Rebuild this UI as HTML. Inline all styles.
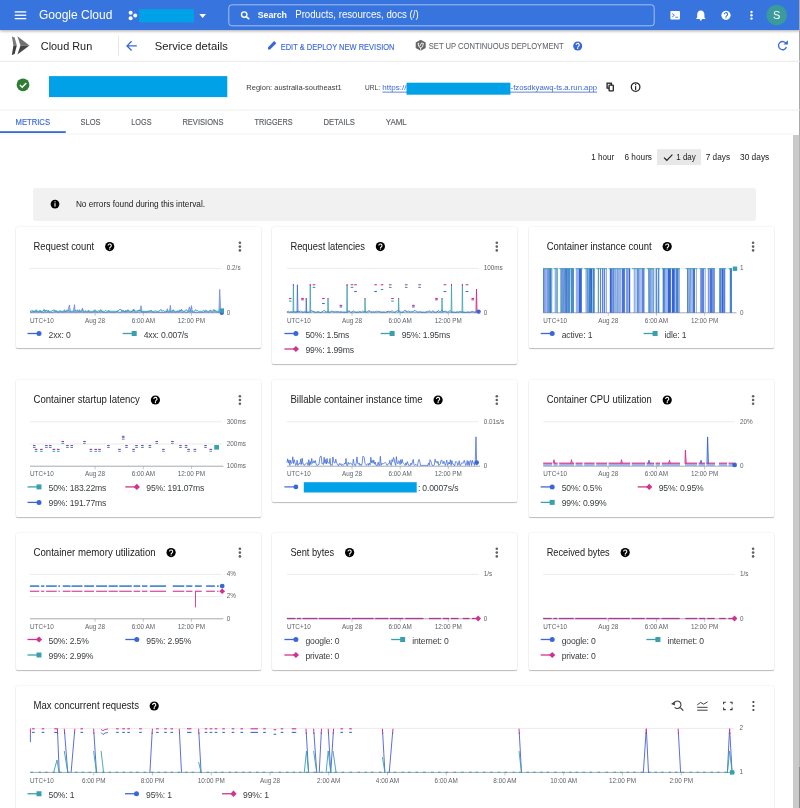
<!DOCTYPE html>
<html><head><meta charset="utf-8"><style>
html,body{margin:0;padding:0;width:800px;height:808px;overflow:hidden;background:#fff;position:relative}
svg{position:absolute;left:0;top:0;z-index:5;will-change:transform}
text{font-family:"Liberation Sans",sans-serif}
</style></head><body>
<div style="position:absolute;left:0px;top:0px;width:800px;height:30px;background:#3874de;box-shadow:0 1px 3px rgba(0,0,0,.35);z-index:2"></div><div style="position:absolute;left:0px;top:30px;width:800px;height:31px;background:#fff"></div><div style="position:absolute;left:33.25px;top:187.75px;width:722.75px;height:32.75px;background:#f1f1f1;border-radius:3px"></div><div style="position:absolute;left:15.5px;top:226.8px;width:245.0px;height:121.5px;background:#fff;border-radius:1.5px;box-shadow:0 1px 1px rgba(0,0,0,.24),0 0 1.5px rgba(0,0,0,.16)"></div><div style="position:absolute;left:272.4px;top:226.8px;width:245.0px;height:136.89999999999998px;background:#fff;border-radius:1.5px;box-shadow:0 1px 1px rgba(0,0,0,.24),0 0 1.5px rgba(0,0,0,.16)"></div><div style="position:absolute;left:528.7px;top:226.8px;width:245.0px;height:121.5px;background:#fff;border-radius:1.5px;box-shadow:0 1px 1px rgba(0,0,0,.24),0 0 1.5px rgba(0,0,0,.16)"></div><div style="position:absolute;left:15.5px;top:380.2px;width:245.0px;height:137.09999999999997px;background:#fff;border-radius:1.5px;box-shadow:0 1px 1px rgba(0,0,0,.24),0 0 1.5px rgba(0,0,0,.16)"></div><div style="position:absolute;left:272.4px;top:380.2px;width:245.0px;height:121.80000000000001px;background:#fff;border-radius:1.5px;box-shadow:0 1px 1px rgba(0,0,0,.24),0 0 1.5px rgba(0,0,0,.16)"></div><div style="position:absolute;left:528.7px;top:380.2px;width:245.0px;height:137.09999999999997px;background:#fff;border-radius:1.5px;box-shadow:0 1px 1px rgba(0,0,0,.24),0 0 1.5px rgba(0,0,0,.16)"></div><div style="position:absolute;left:15.5px;top:532.8px;width:245.0px;height:137.5px;background:#fff;border-radius:1.5px;box-shadow:0 1px 1px rgba(0,0,0,.24),0 0 1.5px rgba(0,0,0,.16)"></div><div style="position:absolute;left:272.4px;top:532.8px;width:245.0px;height:137.5px;background:#fff;border-radius:1.5px;box-shadow:0 1px 1px rgba(0,0,0,.24),0 0 1.5px rgba(0,0,0,.16)"></div><div style="position:absolute;left:528.7px;top:532.8px;width:245.0px;height:137.5px;background:#fff;border-radius:1.5px;box-shadow:0 1px 1px rgba(0,0,0,.24),0 0 1.5px rgba(0,0,0,.16)"></div><div style="position:absolute;left:15.5px;top:685.8px;width:758.1px;height:144.20000000000005px;background:#fff;border-radius:1.5px;box-shadow:0 1px 1px rgba(0,0,0,.24),0 0 1.5px rgba(0,0,0,.16)"></div><div style="position:absolute;left:793px;top:134.5px;width:7px;height:673.5px;background:#cacaca;z-index:3"></div><div style="position:absolute;left:798.6px;top:0px;width:1.3999999999999773px;height:134.5px;background:#a9a9a9;z-index:3"></div><div style="position:absolute;left:798.6px;top:134.5px;width:1.3999999999999773px;height:632.5px;background:#b3b3b3;z-index:3"></div><div style="position:absolute;left:798.6px;top:767px;width:1.3999999999999773px;height:41px;background:#8a8a8a;z-index:3"></div>
<svg width="800" height="808" viewBox="0 0 800 808">
<rect x="14.75" y="11.25" width="11.50" height="1.30" fill="#fff"/>
<rect x="14.75" y="14.60" width="11.50" height="1.30" fill="#fff"/>
<rect x="14.75" y="17.95" width="11.50" height="1.30" fill="#fff"/>
<text x="39.00" y="19.20" font-size="12.0" fill="#fff">Google Cloud</text>
<circle cx="130.6" cy="12.8" r="2.0" fill="#fff"/>
<circle cx="130.6" cy="18.2" r="2.0" fill="#fff"/>
<circle cx="135.2" cy="15.5" r="2.0" fill="#fff"/>
<rect x="139.00" y="9.10" width="55.00" height="13.30" fill="#00a1e6"/>
<path d="M199.3,14 L206,14 L202.65,17.9 Z" fill="#fff"/>
<rect x="228.8" y="4.8" width="425.4" height="21" rx="3" fill="none" stroke="rgba(255,255,255,0.55)" stroke-width="1"/>
<circle cx="244.2" cy="14.6" r="2.7" fill="none" stroke="#fff" stroke-width="1.4"/>
<line x1="246.20" y1="16.60" x2="249.20" y2="19.20" stroke="#fff" stroke-width="1.6"/>
<text x="257.70" y="18.40" font-size="9.6" fill="#fff" font-weight="700" textLength="29.3" lengthAdjust="spacingAndGlyphs">Search</text>
<text x="295.20" y="18.40" font-size="10.1" fill="#fff" textLength="123.5" lengthAdjust="spacingAndGlyphs">Products, resources, docs (/)</text>
<rect x="670.40" y="11.00" width="9.60" height="8.60" fill="#fff" rx="1"/>
<path d="M672.2,13.6 L674.4,15.3 L672.2,17" fill="none" stroke="#3874de" stroke-width="0.9"/>
<rect x="675.20" y="16.80" width="2.80" height="0.80" fill="#3874de"/>
<path d="M700.8,10.6 c-2.4,0 -3.6,1.9 -3.6,4 v2.8 l-1,1.1 v0.5 h9.2 v-0.5 l-1,-1.1 v-2.8 c0,-2.1 -1.2,-4 -3.6,-4z" fill="#fff"/>
<circle cx="700.8" cy="19.6" r="1.1" fill="#fff"/>
<circle cx="726.0" cy="15.3" r="4.6" fill="#fff"/>
<path d="M724.40,14.30 a1.60,1.60 0 1 1 2.40,1.35 c-0.6,0.4 -0.8,0.6 -0.8,1.3" fill="none" stroke="#3874de" stroke-width="1.10"/>
<circle cx="726.00" cy="17.80" r="0.65" fill="#3874de"/>
<circle cx="751.5" cy="12.00" r="1.2" fill="#fff"/>
<circle cx="751.5" cy="15.30" r="1.2" fill="#fff"/>
<circle cx="751.5" cy="18.60" r="1.2" fill="#fff"/>
<circle cx="776.7" cy="15" r="10.3" fill="#3b9a9c"/>
<text x="776.70" y="19.00" font-size="11" fill="#fff" text-anchor="middle">S</text>
<rect x="0.00" y="60.80" width="800.00" height="0.90" fill="#e6e6e6"/>
<path d="M11.9,36.6 L14.6,37.5 L16.8,45.4 L13.4,45.4 Z" fill="#7a7a7a"/>
<path d="M13.4,45.4 L16.8,45.4 L14.6,54 L11.9,55 Z" fill="#3e3e3e"/>
<path d="M17.4,36.3 L29.5,45.4 L20.5,45.4 Z" fill="#707070"/>
<path d="M20.5,45.4 L29.5,45.4 L17.4,54.6 Z" fill="#454545"/>
<text x="40.80" y="49.50" font-size="11.5" fill="#202124" textLength="51.4" lengthAdjust="spacingAndGlyphs">Cloud Run</text>
<rect x="118.20" y="35.70" width="0.80" height="20.00" fill="#e0e0e0"/>
<path d="M136.8,45.9 H127.6 M131.6,41.3 L127,45.9 L131.6,50.5" fill="none" stroke="#3a67d8" stroke-width="1.3"/>
<text x="154.70" y="49.60" font-size="11.8" fill="#202124" textLength="73.2" lengthAdjust="spacingAndGlyphs">Service details</text>
<path d="M268,47.3 L274.2,41.1 L276.3,43.2 L270.1,49.4 L268,49.4 Z" fill="#3a67d8"/>
<text x="280.70" y="49.60" font-size="8.3" fill="#3a67d8" stroke="#3a67d8" stroke-width="0.12" textLength="113.8" lengthAdjust="spacingAndGlyphs">EDIT &amp; DEPLOY NEW REVISION</text>
<path d="M420.7,39.7 L425.7,42.5 L425.7,48.0 L420.7,50.7 L415.7,48.0 L415.7,42.5 Z" fill="#666"/>
<path d="M418.0,43.4 Q418.3,47.6 420.7,47.9 Q423.1,47.6 423.4,43.4 M420.7,47.9 V50.6 M419.6,46.4 L421.9,42.6 M418.0,43.4 H419.2 M422.2,43.4 H423.4" fill="none" stroke="#fff" stroke-width="0.9"/>
<text x="428.80" y="48.90" font-size="8.5" fill="#5f6368" stroke="#5f6368" stroke-width="0.05" textLength="134.9" lengthAdjust="spacingAndGlyphs">SET UP CONTINUOUS DEPLOYMENT</text>
<circle cx="577.7" cy="46.0" r="4.5" fill="#3a67d8"/>
<path d="M576.13,45.02 a1.57,1.57 0 1 1 2.35,1.32 c-0.6,0.4 -0.8,0.6 -0.8,1.3" fill="none" stroke="#fff" stroke-width="1.08"/>
<circle cx="577.70" cy="48.45" r="0.64" fill="#fff"/>
<path d="M786.2,43.6 A4.1,4.1 0 1 0 786.5,47" fill="none" stroke="#3a67d8" stroke-width="1.3"/>
<path d="M783.5,44.6 L787.9,44.6 L787.9,40.2 Z" fill="#3a67d8"/>
<circle cx="23" cy="84.8" r="6.4" fill="#2e7d32"/>
<path d="M19.9,85 L22.2,87.2 L26.3,82.9" fill="none" stroke="#fff" stroke-width="1.4"/>
<rect x="49.00" y="76.10" width="178.30" height="21.00" fill="#00a1e6"/>
<text x="246.30" y="90.40" font-size="8.1" fill="#3c4043" textLength="95.5" lengthAdjust="spacingAndGlyphs">Region: australia-southeast1</text>
<text x="365.00" y="90.40" font-size="8.1" fill="#3c4043" textLength="15" lengthAdjust="spacingAndGlyphs">URL:</text>
<text x="382.30" y="90.40" font-size="8.1" fill="#3a67d8" textLength="24.2" lengthAdjust="spacingAndGlyphs">https://</text>
<text x="510.60" y="90.40" font-size="8.1" fill="#3a67d8" textLength="86.4" lengthAdjust="spacingAndGlyphs">-fzosdkyawq-ts.a.run.app</text>
<rect x="382.30" y="91.70" width="214.70" height="0.80" fill="#3a67d8"/>
<rect x="406.50" y="82.70" width="103.90" height="12.00" fill="#00a1e6"/>
<rect x="607.1" y="83.2" width="4.3" height="4.9" fill="none" stroke="#202124" stroke-width="1.3"/>
<rect x="609.1" y="85.2" width="4.2" height="5.7" rx="0.5" fill="#fff" stroke="#202124" stroke-width="1.3"/>
<circle cx="635.6" cy="87.1" r="4.3" fill="none" stroke="#202124" stroke-width="1.25"/>
<rect x="635.00" y="86.20" width="1.20" height="3.70" fill="#202124"/>
<rect x="635.00" y="84.10" width="1.20" height="1.20" fill="#202124"/>
<rect x="0.00" y="109.60" width="800.00" height="0.80" fill="#ececec"/>
<text x="15.50" y="125.40" font-size="8.6" fill="#3a67d8" stroke="#3a67d8" stroke-width="0.15" textLength="34.5" lengthAdjust="spacingAndGlyphs">METRICS</text>
<rect x="0.00" y="131.20" width="65.75" height="1.80" fill="#3a67d8"/>
<text x="80.50" y="125.40" font-size="8.6" fill="#5a5e63" stroke="#5a5e63" stroke-width="0.15" textLength="20" lengthAdjust="spacingAndGlyphs">SLOS</text>
<text x="131.25" y="125.40" font-size="8.6" fill="#5a5e63" stroke="#5a5e63" stroke-width="0.15" textLength="20.25" lengthAdjust="spacingAndGlyphs">LOGS</text>
<text x="182.40" y="125.40" font-size="8.6" fill="#5a5e63" stroke="#5a5e63" stroke-width="0.15" textLength="41.1" lengthAdjust="spacingAndGlyphs">REVISIONS</text>
<text x="254.50" y="125.40" font-size="8.6" fill="#5a5e63" stroke="#5a5e63" stroke-width="0.15" textLength="38.1" lengthAdjust="spacingAndGlyphs">TRIGGERS</text>
<text x="323.50" y="125.40" font-size="8.6" fill="#5a5e63" stroke="#5a5e63" stroke-width="0.15" textLength="31.5" lengthAdjust="spacingAndGlyphs">DETAILS</text>
<text x="385.70" y="125.40" font-size="8.6" fill="#5a5e63" stroke="#5a5e63" stroke-width="0.15" textLength="21" lengthAdjust="spacingAndGlyphs">YAML</text>
<rect x="0.00" y="133.60" width="793.00" height="0.80" fill="#ededed"/>
<rect x="657.00" y="149.25" width="44.00" height="15.75" fill="#e8e8e8"/>
<path d="M664,157.6 L666.8,160.3 L672.4,154.6" fill="none" stroke="#202124" stroke-width="1.2"/>
<text x="591.25" y="160.10" font-size="8.5" fill="#202124" textLength="23" lengthAdjust="spacingAndGlyphs">1 hour</text>
<text x="624.50" y="160.10" font-size="8.5" fill="#202124" textLength="27.5" lengthAdjust="spacingAndGlyphs">6 hours</text>
<text x="676.25" y="160.10" font-size="8.5" fill="#202124" textLength="19.5" lengthAdjust="spacingAndGlyphs">1 day</text>
<text x="705.75" y="160.10" font-size="8.5" fill="#202124" textLength="24.25" lengthAdjust="spacingAndGlyphs">7 days</text>
<text x="740.00" y="160.10" font-size="8.5" fill="#202124" textLength="29.25" lengthAdjust="spacingAndGlyphs">30 days</text>
<circle cx="55" cy="204.1" r="4.4" fill="#000"/>
<rect x="54.45" y="203.20" width="1.10" height="3.40" fill="#fff"/>
<rect x="54.45" y="201.30" width="1.10" height="1.10" fill="#fff"/>
<text x="75.90" y="207.00" font-size="8.8" fill="#202124" textLength="129.2" lengthAdjust="spacingAndGlyphs">No errors found during this interval.</text>
<text x="33.50" y="249.70" font-size="10.4" fill="#202124" textLength="60.7" lengthAdjust="spacingAndGlyphs">Request count</text>
<circle cx="109.7" cy="246.60000000000002" r="4.6" fill="#000"/>
<path d="M108.10,245.60 a1.60,1.60 0 1 1 2.40,1.35 c-0.6,0.4 -0.8,0.6 -0.8,1.3" fill="none" stroke="#fff" stroke-width="1.10"/>
<circle cx="109.70" cy="249.10" r="0.65" fill="#fff"/>
<circle cx="239.9" cy="242.80" r="1.3" fill="#5f6368"/>
<circle cx="239.9" cy="246.60" r="1.3" fill="#5f6368"/>
<circle cx="239.9" cy="250.40" r="1.3" fill="#5f6368"/>
<line x1="30.00" y1="268.40" x2="221.80" y2="268.40" stroke="#e6e6e6" stroke-width="0.8"/>
<line x1="30.00" y1="312.80" x2="223.30" y2="312.80" stroke="#9aa0a6" stroke-width="0.9"/>
<text x="226.80" y="270.10" font-size="6.35" fill="#5f6368">0.2/s</text>
<text x="226.80" y="314.50" font-size="6.35" fill="#5f6368">0</text>
<line x1="95.10" y1="312.80" x2="95.10" y2="315.80" stroke="#9aa0a6" stroke-width="0.6"/>
<text x="95.10" y="322.90" font-size="6.35" fill="#5f6368" text-anchor="middle">Aug 28</text>
<line x1="143.30" y1="312.80" x2="143.30" y2="315.80" stroke="#9aa0a6" stroke-width="0.6"/>
<text x="143.30" y="322.90" font-size="6.35" fill="#5f6368" text-anchor="middle">6:00 AM</text>
<line x1="191.40" y1="312.80" x2="191.40" y2="315.80" stroke="#9aa0a6" stroke-width="0.6"/>
<text x="191.40" y="322.90" font-size="6.35" fill="#5f6368" text-anchor="middle">12:00 PM</text>
<text x="30.00" y="322.90" font-size="6.35" fill="#5f6368">UTC+10</text>
<polygon points="30.00,312.80 30.00,311.00 31.01,312.10 32.02,312.10 33.03,311.12 34.04,310.85 35.05,312.10 36.06,309.58 37.07,310.68 38.08,312.10 39.09,312.10 40.09,309.94 41.10,312.10 42.11,312.10 43.12,312.10 44.13,312.10 45.14,310.46 46.15,312.10 47.16,312.10 48.17,309.91 49.18,312.10 50.19,312.10 51.20,312.10 52.21,312.10 53.22,312.10 54.23,311.07 55.24,310.80 56.25,310.40 57.26,312.10 58.27,312.10 59.27,312.10 60.28,310.83 61.29,311.29 62.30,312.10 63.31,312.10 64.32,309.50 65.33,312.10 66.34,310.03 67.35,310.98 68.36,308.54 69.37,304.93 70.38,310.61 71.39,312.10 72.40,312.10 73.41,310.77 74.42,304.55 75.43,312.10 76.44,312.10 77.45,310.57 78.45,312.10 79.46,309.68 80.47,312.10 81.48,310.26 82.49,307.90 83.50,312.10 84.51,312.10 85.52,310.85 86.53,312.10 87.54,312.10 88.55,309.98 89.56,312.10 90.57,312.10 91.58,312.10 92.59,312.10 93.60,311.00 94.61,309.65 95.62,310.20 96.63,312.10 97.63,312.10 98.64,312.10 99.65,310.82 100.66,312.10 101.67,310.38 102.68,312.10 103.69,312.10 104.70,312.10 105.71,312.10 106.72,312.10 107.73,312.10 108.74,310.18 109.75,312.10 110.76,312.10 111.77,312.10 112.78,312.10 113.79,312.10 114.80,312.10 115.81,312.10 116.81,311.06 117.82,311.15 118.83,312.10 119.84,312.10 120.85,312.10 121.86,310.33 122.87,310.44 123.88,310.66 124.89,312.10 125.90,310.05 126.91,312.10 127.92,310.77 128.93,311.04 129.94,312.10 130.95,312.10 131.96,311.18 132.97,309.42 133.98,309.59 134.99,312.10 135.99,312.10 137.00,312.10 138.01,311.20 139.02,309.78 140.03,310.61 141.04,305.63 142.05,312.10 143.06,312.10 144.07,312.10 145.08,312.10 146.09,312.10 147.10,312.10 148.11,311.16 149.12,311.13 150.13,312.10 151.14,310.38 152.15,312.10 153.16,312.10 154.17,312.10 155.17,312.10 156.18,312.10 157.19,312.10 158.20,312.10 159.21,312.10 160.22,312.10 161.23,312.10 162.24,312.10 163.25,312.10 164.26,312.10 165.27,312.10 166.28,312.10 167.29,308.63 168.30,312.10 169.31,312.10 170.32,305.31 171.33,312.10 172.34,312.10 173.35,309.84 174.35,312.10 175.36,312.10 176.37,312.10 177.38,310.79 178.39,312.10 179.40,309.96 180.41,310.27 181.42,309.51 182.43,312.10 183.44,312.10 184.45,310.88 185.46,312.10 186.47,312.10 187.48,312.10 188.49,309.50 189.50,306.84 190.51,310.61 191.52,305.55 192.53,312.10 193.53,312.10 194.54,312.10 195.55,312.10 196.56,312.10 197.57,312.10 198.58,312.10 199.59,312.10 200.60,312.10 201.61,312.10 202.62,312.10 203.63,312.10 204.64,310.70 205.65,309.99 206.66,310.97 207.67,312.10 208.68,312.10 209.69,310.92 210.70,310.82 211.71,312.10 212.71,312.10 213.72,311.18 214.73,310.29 215.74,310.76 216.75,312.10 217.76,312.10 218.77,312.10 219.78,289.30 220.79,312.10 221.80,312.10 221.80,312.80" fill="#3a67d8" fill-opacity="0.45"/>
<polyline points="30.00,311.00 31.01,312.10 32.02,312.10 33.03,311.12 34.04,310.85 35.05,312.10 36.06,309.58 37.07,310.68 38.08,312.10 39.09,312.10 40.09,309.94 41.10,312.10 42.11,312.10 43.12,312.10 44.13,312.10 45.14,310.46 46.15,312.10 47.16,312.10 48.17,309.91 49.18,312.10 50.19,312.10 51.20,312.10 52.21,312.10 53.22,312.10 54.23,311.07 55.24,310.80 56.25,310.40 57.26,312.10 58.27,312.10 59.27,312.10 60.28,310.83 61.29,311.29 62.30,312.10 63.31,312.10 64.32,309.50 65.33,312.10 66.34,310.03 67.35,310.98 68.36,308.54 69.37,304.93 70.38,310.61 71.39,312.10 72.40,312.10 73.41,310.77 74.42,304.55 75.43,312.10 76.44,312.10 77.45,310.57 78.45,312.10 79.46,309.68 80.47,312.10 81.48,310.26 82.49,307.90 83.50,312.10 84.51,312.10 85.52,310.85 86.53,312.10 87.54,312.10 88.55,309.98 89.56,312.10 90.57,312.10 91.58,312.10 92.59,312.10 93.60,311.00 94.61,309.65 95.62,310.20 96.63,312.10 97.63,312.10 98.64,312.10 99.65,310.82 100.66,312.10 101.67,310.38 102.68,312.10 103.69,312.10 104.70,312.10 105.71,312.10 106.72,312.10 107.73,312.10 108.74,310.18 109.75,312.10 110.76,312.10 111.77,312.10 112.78,312.10 113.79,312.10 114.80,312.10 115.81,312.10 116.81,311.06 117.82,311.15 118.83,312.10 119.84,312.10 120.85,312.10 121.86,310.33 122.87,310.44 123.88,310.66 124.89,312.10 125.90,310.05 126.91,312.10 127.92,310.77 128.93,311.04 129.94,312.10 130.95,312.10 131.96,311.18 132.97,309.42 133.98,309.59 134.99,312.10 135.99,312.10 137.00,312.10 138.01,311.20 139.02,309.78 140.03,310.61 141.04,305.63 142.05,312.10 143.06,312.10 144.07,312.10 145.08,312.10 146.09,312.10 147.10,312.10 148.11,311.16 149.12,311.13 150.13,312.10 151.14,310.38 152.15,312.10 153.16,312.10 154.17,312.10 155.17,312.10 156.18,312.10 157.19,312.10 158.20,312.10 159.21,312.10 160.22,312.10 161.23,312.10 162.24,312.10 163.25,312.10 164.26,312.10 165.27,312.10 166.28,312.10 167.29,308.63 168.30,312.10 169.31,312.10 170.32,305.31 171.33,312.10 172.34,312.10 173.35,309.84 174.35,312.10 175.36,312.10 176.37,312.10 177.38,310.79 178.39,312.10 179.40,309.96 180.41,310.27 181.42,309.51 182.43,312.10 183.44,312.10 184.45,310.88 185.46,312.10 186.47,312.10 187.48,312.10 188.49,309.50 189.50,306.84 190.51,310.61 191.52,305.55 192.53,312.10 193.53,312.10 194.54,312.10 195.55,312.10 196.56,312.10 197.57,312.10 198.58,312.10 199.59,312.10 200.60,312.10 201.61,312.10 202.62,312.10 203.63,312.10 204.64,310.70 205.65,309.99 206.66,310.97 207.67,312.10 208.68,312.10 209.69,310.92 210.70,310.82 211.71,312.10 212.71,312.10 213.72,311.18 214.73,310.29 215.74,310.76 216.75,312.10 217.76,312.10 218.77,312.10 219.78,289.30 220.79,312.10 221.80,312.10" fill="none" stroke="#3a67d8" stroke-width="0.5" stroke-linejoin="round"/>
<polyline points="30.00,311.30 31.01,311.30 32.02,310.43 33.03,311.30 34.04,311.30 35.05,311.30 36.06,311.01 37.07,311.30 38.08,311.30 39.09,311.18 40.09,311.30 41.10,311.30 42.11,311.30 43.12,311.30 44.13,309.34 45.14,311.30 46.15,309.96 47.16,311.30 48.17,311.30 49.18,311.30 50.19,311.30 51.20,311.30 52.21,310.53 53.22,310.38 54.23,309.76 55.24,311.30 56.25,311.30 57.26,311.30 58.27,311.30 59.27,310.95 60.28,311.30 61.29,311.30 62.30,311.30 63.31,311.30 64.32,311.30 65.33,311.30 66.34,311.17 67.35,311.30 68.36,310.57 69.37,311.30 70.38,311.30 71.39,311.30 72.40,311.10 73.41,311.30 74.42,311.30 75.43,310.24 76.44,311.30 77.45,309.76 78.45,311.30 79.46,311.30 80.47,311.30 81.48,311.30 82.49,309.91 83.50,311.30 84.51,311.30 85.52,310.89 86.53,311.30 87.54,311.30 88.55,311.30 89.56,311.30 90.57,311.30 91.58,311.30 92.59,311.30 93.60,311.30 94.61,311.30 95.62,311.27 96.63,311.30 97.63,311.30 98.64,310.80 99.65,311.30 100.66,309.48 101.67,311.30 102.68,311.30 103.69,311.30 104.70,311.29 105.71,310.35 106.72,311.30 107.73,311.30 108.74,310.75 109.75,311.30 110.76,311.30 111.77,311.30 112.78,311.30 113.79,311.30 114.80,311.30 115.81,311.30 116.81,311.30 117.82,311.30 118.83,309.87 119.84,309.53 120.85,309.39 121.86,311.30 122.87,311.30 123.88,311.30 124.89,311.30 125.90,311.30 126.91,311.30 127.92,309.74 128.93,311.30 129.94,311.00 130.95,311.30 131.96,311.30 132.97,311.30 133.98,309.57 134.99,311.30 135.99,311.04 137.00,311.08 138.01,310.68 139.02,310.30 140.03,310.80 141.04,311.30 142.05,311.30 143.06,311.30 144.07,311.30 145.08,311.30 146.09,311.30 147.10,311.30 148.11,311.30 149.12,311.30 150.13,310.82 151.14,310.41 152.15,311.30 153.16,311.30 154.17,311.30 155.17,310.77 156.18,311.26 157.19,311.30 158.20,311.30 159.21,311.30 160.22,309.85 161.23,309.63 162.24,311.30 163.25,310.25 164.26,311.30 165.27,311.30 166.28,311.30 167.29,311.30 168.30,311.30 169.31,311.30 170.32,311.30 171.33,311.30 172.34,311.15 173.35,309.82 174.35,311.30 175.36,311.30 176.37,311.30 177.38,311.30 178.39,311.18 179.40,311.30 180.41,311.30 181.42,309.34 182.43,310.38 183.44,311.30 184.45,311.30 185.46,310.25 186.47,309.66 187.48,311.30 188.49,311.30 189.50,311.30 190.51,311.30 191.52,311.30 192.53,311.30 193.53,311.30 194.54,311.30 195.55,309.63 196.56,310.77 197.57,310.55 198.58,311.30 199.59,311.30 200.60,311.30 201.61,311.30 202.62,311.20 203.63,310.36 204.64,311.30 205.65,311.30 206.66,310.88 207.67,311.30 208.68,311.30 209.69,310.62 210.70,310.16 211.71,311.30 212.71,311.30 213.72,309.36 214.73,311.30 215.74,310.50 216.75,311.30 217.76,311.24 218.77,311.30 219.78,310.52 220.79,311.30 221.80,311.08" fill="none" stroke="#3aa0b0" stroke-width="1.0" stroke-linejoin="round"/>
<circle cx="221.80" cy="312.80" r="2.2" fill="#3a67d8"/>
<rect x="219.60" y="308.40" width="4.40" height="4.40" fill="#3aa0b0"/>
<line x1="27.50" y1="333.50" x2="38.50" y2="333.50" stroke="#3a67d8" stroke-width="1.3"/>
<circle cx="39.00" cy="333.50" r="2.5" fill="#3a67d8"/>
<text x="48.50" y="337.50" font-size="8.6" fill="#3c4043" letter-spacing="-0.15">2xx: 0</text>
<line x1="122.70" y1="333.50" x2="133.70" y2="333.50" stroke="#3aa0b0" stroke-width="1.3"/>
<rect x="131.70" y="331.00" width="5.00" height="5.00" fill="#3aa0b0"/>
<text x="143.70" y="337.50" font-size="8.6" fill="#3c4043" letter-spacing="-0.15">4xx: 0.007/s</text>
<text x="290.40" y="249.70" font-size="10.4" fill="#202124" textLength="74.5" lengthAdjust="spacingAndGlyphs">Request latencies</text>
<circle cx="380.4" cy="246.60000000000002" r="4.6" fill="#000"/>
<path d="M378.80,245.60 a1.60,1.60 0 1 1 2.40,1.35 c-0.6,0.4 -0.8,0.6 -0.8,1.3" fill="none" stroke="#fff" stroke-width="1.10"/>
<circle cx="380.40" cy="249.10" r="0.65" fill="#fff"/>
<circle cx="496.79999999999995" cy="242.80" r="1.3" fill="#5f6368"/>
<circle cx="496.79999999999995" cy="246.60" r="1.3" fill="#5f6368"/>
<circle cx="496.79999999999995" cy="250.40" r="1.3" fill="#5f6368"/>
<line x1="286.90" y1="268.40" x2="478.70" y2="268.40" stroke="#e6e6e6" stroke-width="0.8"/>
<line x1="286.90" y1="312.80" x2="480.20" y2="312.80" stroke="#9aa0a6" stroke-width="0.9"/>
<text x="483.70" y="270.10" font-size="6.35" fill="#5f6368">100ms</text>
<text x="483.70" y="314.50" font-size="6.35" fill="#5f6368">0</text>
<line x1="352.00" y1="312.80" x2="352.00" y2="315.80" stroke="#9aa0a6" stroke-width="0.6"/>
<text x="352.00" y="322.90" font-size="6.35" fill="#5f6368" text-anchor="middle">Aug 28</text>
<line x1="400.20" y1="312.80" x2="400.20" y2="315.80" stroke="#9aa0a6" stroke-width="0.6"/>
<text x="400.20" y="322.90" font-size="6.35" fill="#5f6368" text-anchor="middle">6:00 AM</text>
<line x1="448.30" y1="312.80" x2="448.30" y2="315.80" stroke="#9aa0a6" stroke-width="0.6"/>
<text x="448.30" y="322.90" font-size="6.35" fill="#5f6368" text-anchor="middle">12:00 PM</text>
<text x="286.90" y="322.90" font-size="6.35" fill="#5f6368">UTC+10</text>
<polyline points="286.90,311.87 288.25,312.20 289.60,312.20 290.96,312.20 292.31,312.20 293.66,312.20 295.01,311.84 296.36,311.56 297.72,311.40 299.07,312.20 300.42,312.35 301.77,311.74 303.13,312.20 304.48,312.42 305.83,312.20 307.18,312.20 308.53,312.23 309.89,312.20 311.24,312.14 312.59,311.35 313.94,312.20 315.29,312.20 316.65,312.22 318.00,311.35 319.35,312.20 320.70,312.47 322.06,311.69 323.41,312.19 324.76,312.20 326.11,312.20 327.46,312.46 328.82,312.00 330.17,312.20 331.52,311.54 332.87,312.20 334.22,312.20 335.58,311.34 336.93,311.52 338.28,312.23 339.63,312.20 340.99,311.36 342.34,312.28 343.69,312.00 345.04,312.20 346.39,312.20 347.75,312.03 349.10,311.33 350.45,312.44 351.80,312.03 353.15,312.20 354.51,312.20 355.86,312.20 357.21,312.20 358.56,312.20 359.92,312.28 361.27,312.20 362.62,312.20 363.97,311.70 365.32,312.05 366.68,312.30 368.03,312.16 369.38,311.35 370.73,311.34 372.08,312.07 373.44,312.20 374.79,312.20 376.14,312.44 377.49,312.05 378.85,312.20 380.20,312.06 381.55,312.20 382.90,312.01 384.25,312.20 385.61,312.20 386.96,312.46 388.31,311.40 389.66,311.60 391.01,312.20 392.37,312.17 393.72,312.20 395.07,312.20 396.42,311.64 397.78,312.17 399.13,311.59 400.48,312.20 401.83,312.20 403.18,312.20 404.54,312.22 405.89,311.35 407.24,312.20 408.59,312.20 409.94,311.91 411.30,312.20 412.65,311.54 414.00,312.20 415.35,312.20 416.71,312.20 418.06,312.20 419.41,312.12 420.76,311.56 422.11,312.26 423.47,312.20 424.82,312.42 426.17,311.84 427.52,311.32 428.88,312.20 430.23,312.20 431.58,312.40 432.93,311.90 434.28,312.20 435.64,312.22 436.99,311.76 438.34,312.20 439.69,312.20 441.04,312.20 442.40,312.20 443.75,311.49 445.10,311.82 446.45,311.61 447.80,312.20 449.16,312.32 450.51,312.20 451.86,312.20 453.21,312.02 454.57,312.20 455.92,312.20 457.27,311.53 458.62,312.20 459.97,312.20 461.33,311.93 462.68,312.20 464.03,312.20 465.38,312.20 466.74,312.15 468.09,312.27 469.44,312.20 470.79,312.20 472.14,312.20 473.50,311.46 474.85,312.19 476.20,312.20" fill="none" stroke="#3aa0b0" stroke-width="0.7" stroke-linejoin="round"/>
<polyline points="286.90,312.20 288.25,311.19 289.60,312.20 290.96,311.69 292.31,312.05 293.66,311.18 295.01,312.20 296.36,312.47 297.72,311.01 299.07,311.81 300.42,310.75 301.77,312.20 303.13,312.28 304.48,311.29 305.83,312.20 307.18,312.14 308.53,312.20 309.89,311.88 311.24,310.40 312.59,311.25 313.94,311.58 315.29,312.20 316.65,312.20 318.00,312.07 319.35,312.20 320.70,312.49 322.06,312.20 323.41,310.70 324.76,310.56 326.11,312.14 327.46,311.29 328.82,312.20 330.17,312.20 331.52,311.13 332.87,311.39 334.22,311.88 335.58,312.20 336.93,312.20 338.28,311.42 339.63,312.20 340.99,312.20 342.34,312.22 343.69,312.20 345.04,312.20 346.39,312.38 347.75,312.20 349.10,310.51 350.45,312.20 351.80,312.20 353.15,310.77 354.51,311.61 355.86,312.20 357.21,312.20 358.56,312.02 359.92,311.36 361.27,312.23 362.62,310.91 363.97,312.20 365.32,311.26 366.68,312.20 368.03,310.66 369.38,311.18 370.73,312.20 372.08,312.20 373.44,311.58 374.79,312.20 376.14,311.05 377.49,311.54 378.85,311.14 380.20,311.98 381.55,312.20 382.90,312.20 384.25,312.10 385.61,312.26 386.96,311.55 388.31,311.53 389.66,312.20 391.01,311.10 392.37,310.89 393.72,312.20 395.07,312.20 396.42,311.39 397.78,310.41 399.13,310.61 400.48,312.20 401.83,312.20 403.18,312.20 404.54,310.34 405.89,310.40 407.24,312.20 408.59,310.77 409.94,312.20 411.30,311.73 412.65,312.20 414.00,310.53 415.35,310.71 416.71,311.40 418.06,312.20 419.41,311.92 420.76,312.20 422.11,312.42 423.47,312.15 424.82,312.20 426.17,312.20 427.52,312.20 428.88,310.77 430.23,311.33 431.58,312.20 432.93,310.58 434.28,312.20 435.64,312.20 436.99,312.20 438.34,310.32 439.69,312.20 441.04,310.75 442.40,310.32 443.75,312.20 445.10,310.82 446.45,312.11 447.80,312.20 449.16,310.70 450.51,311.09 451.86,312.20 453.21,312.20 454.57,312.20 455.92,312.50 457.27,312.17 458.62,312.20 459.97,311.37 461.33,312.20 462.68,312.00 464.03,312.20 465.38,312.49 466.74,312.27 468.09,312.01 469.44,312.20 470.79,312.20 472.14,311.13 473.50,312.20 474.85,312.20 476.20,312.17" fill="none" stroke="#3a67d8" stroke-width="0.7" stroke-linejoin="round"/>
<polyline points="293.00,312.50 293.40,284.75 293.80,312.50" fill="none" stroke="#3aa0b0" stroke-width="0.8" stroke-linejoin="round"/>
<line x1="293.40" y1="283.95" x2="293.40" y2="285.95" stroke="#d0338e" stroke-width="1.0"/>
<polyline points="309.85,312.50 310.25,284.75 310.65,312.50" fill="none" stroke="#3aa0b0" stroke-width="0.8" stroke-linejoin="round"/>
<line x1="310.25" y1="283.95" x2="310.25" y2="285.95" stroke="#d0338e" stroke-width="1.0"/>
<polyline points="346.70,312.50 347.10,284.75 347.50,312.50" fill="none" stroke="#3aa0b0" stroke-width="0.8" stroke-linejoin="round"/>
<line x1="347.10" y1="283.95" x2="347.10" y2="285.95" stroke="#d0338e" stroke-width="1.0"/>
<polyline points="451.10,312.50 451.50,284.75 451.90,312.50" fill="none" stroke="#3aa0b0" stroke-width="0.8" stroke-linejoin="round"/>
<line x1="451.50" y1="283.95" x2="451.50" y2="285.95" stroke="#d0338e" stroke-width="1.0"/>
<polyline points="462.00,312.50 462.40,284.75 462.80,312.50" fill="none" stroke="#3aa0b0" stroke-width="0.8" stroke-linejoin="round"/>
<line x1="462.40" y1="283.95" x2="462.40" y2="285.95" stroke="#d0338e" stroke-width="1.0"/>
<polyline points="297.00,312.50 297.40,284.75 298.00,312.50" fill="none" stroke="#3a67d8" stroke-width="0.8" stroke-linejoin="round"/>
<polyline points="305.95,312.50 306.25,298.50 306.75,312.50" fill="none" stroke="#3a67d8" stroke-width="0.8" stroke-linejoin="round"/>
<line x1="305.75" y1="298.50" x2="306.75" y2="298.50" stroke="#d0338e" stroke-width="1.0"/>
<polyline points="327.70,312.50 328.00,298.50 328.50,312.50" fill="none" stroke="#3aa0b0" stroke-width="0.8" stroke-linejoin="round"/>
<line x1="327.50" y1="298.50" x2="328.50" y2="298.50" stroke="#d0338e" stroke-width="1.0"/>
<polyline points="364.70,312.50 365.00,298.50 365.50,312.50" fill="none" stroke="#3aa0b0" stroke-width="0.8" stroke-linejoin="round"/>
<line x1="364.50" y1="298.50" x2="365.50" y2="298.50" stroke="#d0338e" stroke-width="1.0"/>
<polyline points="398.30,312.50 398.60,298.50 399.10,312.50" fill="none" stroke="#3aa0b0" stroke-width="0.8" stroke-linejoin="round"/>
<line x1="398.10" y1="298.50" x2="399.10" y2="298.50" stroke="#d0338e" stroke-width="1.0"/>
<polyline points="441.70,312.50 442.00,298.50 442.50,312.50" fill="none" stroke="#3aa0b0" stroke-width="0.8" stroke-linejoin="round"/>
<line x1="441.50" y1="298.50" x2="442.50" y2="298.50" stroke="#d0338e" stroke-width="1.0"/>
<line x1="312.70" y1="284.75" x2="315.30" y2="284.75" stroke="#d0338e" stroke-width="1.1"/>
<line x1="312.70" y1="287.40" x2="315.30" y2="287.40" stroke="#3aa0b0" stroke-width="1.1"/>
<line x1="350.70" y1="284.75" x2="353.30" y2="284.75" stroke="#d0338e" stroke-width="1.1"/>
<line x1="350.70" y1="287.40" x2="353.30" y2="287.40" stroke="#3aa0b0" stroke-width="1.1"/>
<line x1="354.20" y1="284.75" x2="356.80" y2="284.75" stroke="#d0338e" stroke-width="1.1"/>
<line x1="354.20" y1="291.50" x2="356.80" y2="291.50" stroke="#3a67d8" stroke-width="1.1"/>
<line x1="374.30" y1="284.75" x2="376.90" y2="284.75" stroke="#d0338e" stroke-width="1.1"/>
<line x1="374.30" y1="291.50" x2="376.90" y2="291.50" stroke="#3a67d8" stroke-width="1.1"/>
<line x1="380.70" y1="284.75" x2="383.30" y2="284.75" stroke="#d0338e" stroke-width="1.1"/>
<line x1="380.70" y1="289.50" x2="383.30" y2="289.50" stroke="#3aa0b0" stroke-width="1.1"/>
<line x1="388.95" y1="284.75" x2="391.55" y2="284.75" stroke="#d0338e" stroke-width="1.1"/>
<line x1="388.95" y1="287.40" x2="391.55" y2="287.40" stroke="#3aa0b0" stroke-width="1.1"/>
<line x1="404.95" y1="284.75" x2="407.55" y2="284.75" stroke="#d0338e" stroke-width="1.1"/>
<line x1="404.95" y1="287.40" x2="407.55" y2="287.40" stroke="#3aa0b0" stroke-width="1.1"/>
<line x1="418.30" y1="284.75" x2="420.90" y2="284.75" stroke="#d0338e" stroke-width="1.1"/>
<line x1="418.30" y1="287.40" x2="420.90" y2="287.40" stroke="#3aa0b0" stroke-width="1.1"/>
<line x1="443.60" y1="284.75" x2="446.20" y2="284.75" stroke="#d0338e" stroke-width="1.1"/>
<line x1="443.60" y1="291.50" x2="446.20" y2="291.50" stroke="#3a67d8" stroke-width="1.1"/>
<line x1="465.70" y1="284.75" x2="468.30" y2="284.75" stroke="#d0338e" stroke-width="1.1"/>
<line x1="465.70" y1="291.50" x2="468.30" y2="291.50" stroke="#3a67d8" stroke-width="1.1"/>
<line x1="288.95" y1="298.50" x2="291.55" y2="298.50" stroke="#d0338e" stroke-width="1.1"/>
<line x1="288.95" y1="301.10" x2="291.55" y2="301.10" stroke="#3aa0b0" stroke-width="1.1"/>
<line x1="301.20" y1="298.50" x2="303.80" y2="298.50" stroke="#d0338e" stroke-width="1.1"/>
<line x1="301.20" y1="299.80" x2="303.80" y2="299.80" stroke="#d0338e" stroke-width="1.1"/>
<line x1="322.10" y1="298.50" x2="324.70" y2="298.50" stroke="#d0338e" stroke-width="1.1"/>
<line x1="322.10" y1="303.50" x2="324.70" y2="303.50" stroke="#3a67d8" stroke-width="1.1"/>
<line x1="391.20" y1="298.50" x2="393.80" y2="298.50" stroke="#d0338e" stroke-width="1.1"/>
<line x1="391.20" y1="301.10" x2="393.80" y2="301.10" stroke="#3aa0b0" stroke-width="1.1"/>
<line x1="435.20" y1="298.50" x2="437.80" y2="298.50" stroke="#d0338e" stroke-width="1.1"/>
<line x1="435.20" y1="299.80" x2="437.80" y2="299.80" stroke="#d0338e" stroke-width="1.1"/>
<line x1="471.45" y1="298.50" x2="474.05" y2="298.50" stroke="#d0338e" stroke-width="1.1"/>
<line x1="471.45" y1="299.80" x2="474.05" y2="299.80" stroke="#d0338e" stroke-width="1.1"/>
<line x1="339.60" y1="305.40" x2="342.20" y2="305.40" stroke="#d0338e" stroke-width="1.1"/>
<line x1="339.60" y1="306.90" x2="342.20" y2="306.90" stroke="#3a67d8" stroke-width="1.1"/>
<line x1="412.10" y1="305.40" x2="414.70" y2="305.40" stroke="#d0338e" stroke-width="1.1"/>
<line x1="412.10" y1="306.90" x2="414.70" y2="306.90" stroke="#3a67d8" stroke-width="1.1"/>
<polyline points="476.00,312.50 476.50,289.00 477.00,312.50" fill="none" stroke="#d0338e" stroke-width="1.0" stroke-linejoin="round"/>
<circle cx="478.60" cy="311.60" r="2.2" fill="#3a67d8"/>
<line x1="284.40" y1="333.50" x2="295.40" y2="333.50" stroke="#3a67d8" stroke-width="1.3"/>
<circle cx="295.90" cy="333.50" r="2.5" fill="#3a67d8"/>
<text x="305.40" y="337.50" font-size="8.6" fill="#3c4043" letter-spacing="-0.15">50%: 1.5ms</text>
<line x1="380.65" y1="333.50" x2="391.65" y2="333.50" stroke="#3aa0b0" stroke-width="1.3"/>
<rect x="389.65" y="331.00" width="5.00" height="5.00" fill="#3aa0b0"/>
<text x="401.65" y="337.50" font-size="8.6" fill="#3c4043" letter-spacing="-0.15">95%: 1.95ms</text>
<line x1="284.40" y1="349.00" x2="295.40" y2="349.00" stroke="#d0338e" stroke-width="1.3"/>
<path d="M295.90,345.88 L299.02,349.00 L295.90,352.12 L292.77,349.00 Z" fill="#d0338e"/>
<text x="305.40" y="353.00" font-size="8.6" fill="#3c4043" letter-spacing="-0.15">99%: 1.99ms</text>
<text x="546.70" y="249.70" font-size="10.4" fill="#202124" textLength="105.0" lengthAdjust="spacingAndGlyphs">Container instance count</text>
<circle cx="667.2" cy="246.60000000000002" r="4.6" fill="#000"/>
<path d="M665.60,245.60 a1.60,1.60 0 1 1 2.40,1.35 c-0.6,0.4 -0.8,0.6 -0.8,1.3" fill="none" stroke="#fff" stroke-width="1.10"/>
<circle cx="667.20" cy="249.10" r="0.65" fill="#fff"/>
<circle cx="753.1" cy="242.80" r="1.3" fill="#5f6368"/>
<circle cx="753.1" cy="246.60" r="1.3" fill="#5f6368"/>
<circle cx="753.1" cy="250.40" r="1.3" fill="#5f6368"/>
<line x1="543.20" y1="268.40" x2="735.00" y2="268.40" stroke="#e6e6e6" stroke-width="0.8"/>
<line x1="543.20" y1="312.80" x2="736.50" y2="312.80" stroke="#9aa0a6" stroke-width="0.9"/>
<text x="740.00" y="270.10" font-size="6.35" fill="#5f6368">1</text>
<text x="740.00" y="314.50" font-size="6.35" fill="#5f6368">0</text>
<line x1="608.30" y1="312.80" x2="608.30" y2="315.80" stroke="#9aa0a6" stroke-width="0.6"/>
<text x="608.30" y="322.90" font-size="6.35" fill="#5f6368" text-anchor="middle">Aug 28</text>
<line x1="656.50" y1="312.80" x2="656.50" y2="315.80" stroke="#9aa0a6" stroke-width="0.6"/>
<text x="656.50" y="322.90" font-size="6.35" fill="#5f6368" text-anchor="middle">6:00 AM</text>
<line x1="704.60" y1="312.80" x2="704.60" y2="315.80" stroke="#9aa0a6" stroke-width="0.6"/>
<text x="704.60" y="322.90" font-size="6.35" fill="#5f6368" text-anchor="middle">12:00 PM</text>
<text x="543.20" y="322.90" font-size="6.35" fill="#5f6368">UTC+10</text>
<rect x="543.20" y="268.40" width="1.00" height="44.40" fill="#3463d8" fill-opacity="1.0"/>
<rect x="544.20" y="268.40" width="1.50" height="44.40" fill="#3463d8" fill-opacity="0.65"/>
<rect x="545.70" y="268.40" width="1.00" height="44.40" fill="#3463d8" fill-opacity="0.5"/>
<rect x="546.70" y="268.40" width="2.50" height="44.40" fill="#3463d8" fill-opacity="0.65"/>
<rect x="549.20" y="268.40" width="2.00" height="44.40" fill="#3463d8" fill-opacity="0.9"/>
<line x1="549.20" y1="268.40" x2="549.32" y2="312.80" stroke="#3aa0b0" stroke-width="0.8"/>
<rect x="551.70" y="268.40" width="0.30" height="44.40" fill="#3463d8" fill-opacity="0.9"/>
<line x1="551.93" y1="268.40" x2="551.70" y2="312.80" stroke="#3aa0b0" stroke-width="0.8"/>
<rect x="554.60" y="268.40" width="2.50" height="44.40" fill="#3463d8" fill-opacity="0.5"/>
<rect x="557.10" y="268.40" width="0.50" height="44.40" fill="#3463d8" fill-opacity="0.5"/>
<line x1="557.25" y1="268.40" x2="557.25" y2="312.80" stroke="#3aa0b0" stroke-width="0.8"/>
<rect x="560.00" y="268.40" width="2.00" height="44.40" fill="#3463d8" fill-opacity="0.5"/>
<line x1="561.69" y1="268.40" x2="561.49" y2="312.80" stroke="#3aa0b0" stroke-width="0.8"/>
<rect x="562.00" y="268.40" width="3.00" height="44.40" fill="#3463d8" fill-opacity="0.65"/>
<line x1="564.99" y1="268.40" x2="562.78" y2="312.80" stroke="#3aa0b0" stroke-width="0.8"/>
<rect x="565.00" y="268.40" width="1.00" height="44.40" fill="#3463d8" fill-opacity="0.8"/>
<rect x="566.00" y="268.40" width="1.50" height="44.40" fill="#3463d8" fill-opacity="1.0"/>
<line x1="566.83" y1="268.40" x2="566.65" y2="312.80" stroke="#3aa0b0" stroke-width="0.8"/>
<rect x="567.50" y="268.40" width="2.50" height="44.40" fill="#3463d8" fill-opacity="0.8"/>
<line x1="569.82" y1="268.40" x2="569.74" y2="312.80" stroke="#3aa0b0" stroke-width="0.8"/>
<rect x="570.90" y="268.40" width="1.00" height="44.40" fill="#3463d8" fill-opacity="0.9"/>
<line x1="571.14" y1="268.40" x2="571.64" y2="312.80" stroke="#3aa0b0" stroke-width="0.8"/>
<rect x="571.90" y="268.40" width="2.10" height="44.40" fill="#3463d8" fill-opacity="0.8"/>
<line x1="572.72" y1="268.40" x2="573.16" y2="312.80" stroke="#3aa0b0" stroke-width="0.8"/>
<rect x="575.80" y="268.40" width="3.00" height="44.40" fill="#3463d8" fill-opacity="0.5"/>
<rect x="578.80" y="268.40" width="3.00" height="44.40" fill="#3463d8" fill-opacity="1.0"/>
<rect x="585.40" y="268.40" width="2.00" height="44.40" fill="#3463d8" fill-opacity="0.5"/>
<rect x="587.40" y="268.40" width="1.20" height="44.40" fill="#3463d8" fill-opacity="0.9"/>
<line x1="587.53" y1="268.40" x2="588.15" y2="312.80" stroke="#3aa0b0" stroke-width="0.8"/>
<rect x="589.10" y="268.40" width="3.00" height="44.40" fill="#3463d8" fill-opacity="1.0"/>
<line x1="589.52" y1="268.40" x2="591.03" y2="312.80" stroke="#3aa0b0" stroke-width="0.8"/>
<rect x="592.60" y="268.40" width="2.00" height="44.40" fill="#3463d8" fill-opacity="1.0"/>
<line x1="593.78" y1="268.40" x2="593.33" y2="312.80" stroke="#3aa0b0" stroke-width="0.8"/>
<rect x="598.10" y="268.40" width="1.00" height="44.40" fill="#3463d8" fill-opacity="0.65"/>
<line x1="598.31" y1="268.40" x2="598.21" y2="312.80" stroke="#3aa0b0" stroke-width="0.8"/>
<rect x="600.00" y="268.40" width="1.00" height="44.40" fill="#3463d8" fill-opacity="0.8"/>
<rect x="601.90" y="268.40" width="1.20" height="44.40" fill="#3463d8" fill-opacity="0.8"/>
<rect x="603.60" y="268.40" width="1.50" height="44.40" fill="#3463d8" fill-opacity="0.8"/>
<rect x="605.80" y="268.40" width="1.20" height="44.40" fill="#3463d8" fill-opacity="0.5"/>
<rect x="609.80" y="268.40" width="2.00" height="44.40" fill="#3463d8" fill-opacity="1.0"/>
<rect x="611.80" y="268.40" width="1.50" height="44.40" fill="#3463d8" fill-opacity="0.65"/>
<rect x="613.30" y="268.40" width="1.20" height="44.40" fill="#3463d8" fill-opacity="1.0"/>
<rect x="615.20" y="268.40" width="1.00" height="44.40" fill="#3463d8" fill-opacity="0.5"/>
<line x1="615.96" y1="268.40" x2="616.18" y2="312.80" stroke="#3aa0b0" stroke-width="0.8"/>
<rect x="616.90" y="268.40" width="1.00" height="44.40" fill="#3463d8" fill-opacity="0.65"/>
<rect x="617.90" y="268.40" width="2.00" height="44.40" fill="#3463d8" fill-opacity="0.5"/>
<rect x="619.90" y="268.40" width="1.50" height="44.40" fill="#3463d8" fill-opacity="0.5"/>
<rect x="621.90" y="268.40" width="3.00" height="44.40" fill="#3463d8" fill-opacity="0.9"/>
<rect x="625.80" y="268.40" width="1.00" height="44.40" fill="#3463d8" fill-opacity="0.65"/>
<rect x="626.80" y="268.40" width="1.00" height="44.40" fill="#3463d8" fill-opacity="0.8"/>
<rect x="628.50" y="268.40" width="1.70" height="44.40" fill="#3463d8" fill-opacity="1.0"/>
<rect x="633.70" y="268.40" width="2.00" height="44.40" fill="#3463d8" fill-opacity="0.5"/>
<rect x="636.60" y="268.40" width="1.20" height="44.40" fill="#3463d8" fill-opacity="0.65"/>
<line x1="637.31" y1="268.40" x2="637.43" y2="312.80" stroke="#3aa0b0" stroke-width="0.8"/>
<rect x="637.80" y="268.40" width="1.00" height="44.40" fill="#3463d8" fill-opacity="0.8"/>
<rect x="638.80" y="268.40" width="2.00" height="44.40" fill="#3463d8" fill-opacity="0.5"/>
<rect x="641.50" y="268.40" width="3.00" height="44.40" fill="#3463d8" fill-opacity="0.8"/>
<rect x="648.20" y="268.40" width="1.20" height="44.40" fill="#3463d8" fill-opacity="0.5"/>
<line x1="648.56" y1="268.40" x2="649.04" y2="312.80" stroke="#3aa0b0" stroke-width="0.8"/>
<rect x="649.40" y="268.40" width="1.20" height="44.40" fill="#3463d8" fill-opacity="0.9"/>
<rect x="650.60" y="268.40" width="2.50" height="44.40" fill="#3463d8" fill-opacity="0.5"/>
<rect x="653.60" y="268.40" width="0.40" height="44.40" fill="#3463d8" fill-opacity="1.0"/>
<line x1="653.86" y1="268.40" x2="653.68" y2="312.80" stroke="#3aa0b0" stroke-width="0.8"/>
<rect x="655.60" y="268.40" width="1.50" height="44.40" fill="#3463d8" fill-opacity="0.8"/>
<rect x="658.00" y="268.40" width="1.00" height="44.40" fill="#3463d8" fill-opacity="0.8"/>
<line x1="658.39" y1="268.40" x2="658.03" y2="312.80" stroke="#3aa0b0" stroke-width="0.8"/>
<rect x="659.70" y="268.40" width="0.30" height="44.40" fill="#3463d8" fill-opacity="0.9"/>
<rect x="662.70" y="268.40" width="2.00" height="44.40" fill="#3463d8" fill-opacity="1.0"/>
<line x1="663.91" y1="268.40" x2="663.51" y2="312.80" stroke="#3aa0b0" stroke-width="0.8"/>
<rect x="664.70" y="268.40" width="2.00" height="44.40" fill="#3463d8" fill-opacity="0.5"/>
<rect x="666.70" y="268.40" width="1.20" height="44.40" fill="#3463d8" fill-opacity="0.5"/>
<rect x="667.90" y="268.40" width="3.00" height="44.40" fill="#3463d8" fill-opacity="1.0"/>
<rect x="671.80" y="268.40" width="3.00" height="44.40" fill="#3463d8" fill-opacity="1.0"/>
<rect x="675.50" y="268.40" width="3.00" height="44.40" fill="#3463d8" fill-opacity="0.9"/>
<line x1="676.77" y1="268.40" x2="676.87" y2="312.80" stroke="#3aa0b0" stroke-width="0.8"/>
<rect x="678.50" y="268.40" width="1.50" height="44.40" fill="#3463d8" fill-opacity="0.5"/>
<rect x="687.10" y="268.40" width="1.20" height="44.40" fill="#3463d8" fill-opacity="0.9"/>
<rect x="688.30" y="268.40" width="1.20" height="44.40" fill="#3463d8" fill-opacity="0.5"/>
<rect x="689.50" y="268.40" width="2.00" height="44.40" fill="#3463d8" fill-opacity="0.5"/>
<line x1="690.45" y1="268.40" x2="689.53" y2="312.80" stroke="#3aa0b0" stroke-width="0.8"/>
<rect x="691.50" y="268.40" width="1.50" height="44.40" fill="#3463d8" fill-opacity="0.5"/>
<rect x="693.00" y="268.40" width="2.00" height="44.40" fill="#3463d8" fill-opacity="0.9"/>
<rect x="695.90" y="268.40" width="1.00" height="44.40" fill="#3463d8" fill-opacity="0.5"/>
<rect x="700.10" y="268.40" width="1.00" height="44.40" fill="#3463d8" fill-opacity="0.65"/>
<rect x="701.10" y="268.40" width="3.00" height="44.40" fill="#3463d8" fill-opacity="0.8"/>
<rect x="704.80" y="268.40" width="0.80" height="44.40" fill="#3463d8" fill-opacity="0.65"/>
<rect x="707.80" y="268.40" width="1.20" height="44.40" fill="#3463d8" fill-opacity="0.65"/>
<rect x="709.50" y="268.40" width="3.00" height="44.40" fill="#3463d8" fill-opacity="0.9"/>
<rect x="712.50" y="268.40" width="1.20" height="44.40" fill="#3463d8" fill-opacity="0.9"/>
<rect x="713.70" y="268.40" width="1.30" height="44.40" fill="#3463d8" fill-opacity="0.65"/>
<rect x="719.40" y="268.40" width="1.50" height="44.40" fill="#3463d8" fill-opacity="0.9"/>
<line x1="719.96" y1="268.40" x2="719.78" y2="312.80" stroke="#3aa0b0" stroke-width="0.8"/>
<rect x="721.40" y="268.40" width="2.00" height="44.40" fill="#3463d8" fill-opacity="1.0"/>
<rect x="723.40" y="268.40" width="1.50" height="44.40" fill="#3463d8" fill-opacity="0.9"/>
<rect x="725.60" y="268.40" width="0.40" height="44.40" fill="#3463d8" fill-opacity="0.5"/>
<rect x="729.80" y="268.40" width="2.00" height="44.40" fill="#3463d8" fill-opacity="1.0"/>
<line x1="730.93" y1="268.40" x2="730.45" y2="312.80" stroke="#3aa0b0" stroke-width="0.8"/>
<rect x="731.80" y="268.40" width="0.20" height="44.40" fill="#3463d8" fill-opacity="0.8"/>
<line x1="543.20" y1="268.70" x2="552.00" y2="268.70" stroke="#3aa0b0" stroke-width="0.9"/>
<line x1="553.60" y1="268.70" x2="557.60" y2="268.70" stroke="#3aa0b0" stroke-width="0.9"/>
<line x1="559.20" y1="268.70" x2="574.00" y2="268.70" stroke="#3aa0b0" stroke-width="0.9"/>
<line x1="575.60" y1="268.70" x2="582.60" y2="268.70" stroke="#3aa0b0" stroke-width="0.9"/>
<line x1="584.20" y1="268.70" x2="594.60" y2="268.70" stroke="#3aa0b0" stroke-width="0.9"/>
<line x1="596.20" y1="268.70" x2="607.00" y2="268.70" stroke="#3aa0b0" stroke-width="0.9"/>
<line x1="608.60" y1="268.70" x2="630.20" y2="268.70" stroke="#3aa0b0" stroke-width="0.9"/>
<line x1="631.80" y1="268.70" x2="645.00" y2="268.70" stroke="#3aa0b0" stroke-width="0.9"/>
<line x1="646.60" y1="268.70" x2="654.00" y2="268.70" stroke="#3aa0b0" stroke-width="0.9"/>
<line x1="655.60" y1="268.70" x2="660.00" y2="268.70" stroke="#3aa0b0" stroke-width="0.9"/>
<line x1="661.80" y1="268.70" x2="680.00" y2="268.70" stroke="#3aa0b0" stroke-width="0.9"/>
<line x1="685.60" y1="268.70" x2="697.50" y2="268.70" stroke="#3aa0b0" stroke-width="0.9"/>
<line x1="699.40" y1="268.70" x2="705.60" y2="268.70" stroke="#3aa0b0" stroke-width="0.9"/>
<line x1="707.50" y1="268.70" x2="715.00" y2="268.70" stroke="#3aa0b0" stroke-width="0.9"/>
<line x1="719.40" y1="268.70" x2="726.00" y2="268.70" stroke="#3aa0b0" stroke-width="0.9"/>
<line x1="728.60" y1="268.70" x2="732.00" y2="268.70" stroke="#3aa0b0" stroke-width="0.9"/>
<rect x="732.80" y="266.50" width="4.40" height="4.40" fill="#3aa0b0"/>
<line x1="540.70" y1="333.50" x2="551.70" y2="333.50" stroke="#3a67d8" stroke-width="1.3"/>
<circle cx="552.20" cy="333.50" r="2.5" fill="#3a67d8"/>
<text x="561.70" y="337.50" font-size="8.6" fill="#3c4043" letter-spacing="-0.15">active: 1</text>
<line x1="643.60" y1="333.50" x2="654.60" y2="333.50" stroke="#3aa0b0" stroke-width="1.3"/>
<rect x="652.60" y="331.00" width="5.00" height="5.00" fill="#3aa0b0"/>
<text x="664.60" y="337.50" font-size="8.6" fill="#3c4043" letter-spacing="-0.15">idle: 1</text>
<text x="33.50" y="403.10" font-size="10.4" fill="#202124" textLength="106.4" lengthAdjust="spacingAndGlyphs">Container startup latency</text>
<circle cx="155.4" cy="400.0" r="4.6" fill="#000"/>
<path d="M153.80,399.00 a1.60,1.60 0 1 1 2.40,1.35 c-0.6,0.4 -0.8,0.6 -0.8,1.3" fill="none" stroke="#fff" stroke-width="1.10"/>
<circle cx="155.40" cy="402.50" r="0.65" fill="#fff"/>
<circle cx="239.9" cy="396.20" r="1.3" fill="#5f6368"/>
<circle cx="239.9" cy="400.00" r="1.3" fill="#5f6368"/>
<circle cx="239.9" cy="403.80" r="1.3" fill="#5f6368"/>
<line x1="30.00" y1="421.80" x2="221.80" y2="421.80" stroke="#e6e6e6" stroke-width="0.8"/>
<line x1="30.00" y1="444.00" x2="221.80" y2="444.00" stroke="#e6e6e6" stroke-width="0.8"/>
<text x="226.80" y="445.70" font-size="6.35" fill="#5f6368">200ms</text>
<line x1="30.00" y1="466.20" x2="223.30" y2="466.20" stroke="#9aa0a6" stroke-width="0.9"/>
<text x="226.80" y="423.50" font-size="6.35" fill="#5f6368">300ms</text>
<text x="226.80" y="467.90" font-size="6.35" fill="#5f6368">100ms</text>
<line x1="95.10" y1="466.20" x2="95.10" y2="469.20" stroke="#9aa0a6" stroke-width="0.6"/>
<text x="95.10" y="476.30" font-size="6.35" fill="#5f6368" text-anchor="middle">Aug 28</text>
<line x1="143.30" y1="466.20" x2="143.30" y2="469.20" stroke="#9aa0a6" stroke-width="0.6"/>
<text x="143.30" y="476.30" font-size="6.35" fill="#5f6368" text-anchor="middle">6:00 AM</text>
<line x1="191.40" y1="466.20" x2="191.40" y2="469.20" stroke="#9aa0a6" stroke-width="0.6"/>
<text x="191.40" y="476.30" font-size="6.35" fill="#5f6368" text-anchor="middle">12:00 PM</text>
<text x="30.00" y="476.30" font-size="6.35" fill="#5f6368">UTC+10</text>
<line x1="32.95" y1="445.60" x2="35.55" y2="445.60" stroke="#a0349e" stroke-width="1.1"/>
<line x1="32.95" y1="447.50" x2="35.55" y2="447.50" stroke="#3aa0b0" stroke-width="1.0"/>
<line x1="34.80" y1="449.40" x2="37.40" y2="449.40" stroke="#a0349e" stroke-width="1.1"/>
<line x1="34.80" y1="451.30" x2="37.40" y2="451.30" stroke="#3aa0b0" stroke-width="1.0"/>
<line x1="40.10" y1="449.40" x2="42.70" y2="449.40" stroke="#a0349e" stroke-width="1.1"/>
<line x1="40.10" y1="451.30" x2="42.70" y2="451.30" stroke="#3aa0b0" stroke-width="1.0"/>
<line x1="45.10" y1="445.60" x2="47.70" y2="445.60" stroke="#a0349e" stroke-width="1.1"/>
<line x1="45.10" y1="447.50" x2="47.70" y2="447.50" stroke="#3aa0b0" stroke-width="1.0"/>
<line x1="48.95" y1="445.60" x2="51.55" y2="445.60" stroke="#a0349e" stroke-width="1.1"/>
<line x1="48.95" y1="447.50" x2="51.55" y2="447.50" stroke="#3aa0b0" stroke-width="1.0"/>
<line x1="52.60" y1="449.40" x2="55.20" y2="449.40" stroke="#a0349e" stroke-width="1.1"/>
<line x1="52.60" y1="451.30" x2="55.20" y2="451.30" stroke="#3aa0b0" stroke-width="1.0"/>
<line x1="56.95" y1="449.40" x2="59.55" y2="449.40" stroke="#a0349e" stroke-width="1.1"/>
<line x1="56.95" y1="451.30" x2="59.55" y2="451.30" stroke="#3aa0b0" stroke-width="1.0"/>
<line x1="61.45" y1="441.50" x2="64.05" y2="441.50" stroke="#a0349e" stroke-width="1.1"/>
<line x1="61.45" y1="443.40" x2="64.05" y2="443.40" stroke="#3aa0b0" stroke-width="1.0"/>
<line x1="66.10" y1="445.60" x2="68.70" y2="445.60" stroke="#a0349e" stroke-width="1.1"/>
<line x1="66.10" y1="447.50" x2="68.70" y2="447.50" stroke="#3aa0b0" stroke-width="1.0"/>
<line x1="70.45" y1="445.60" x2="73.05" y2="445.60" stroke="#a0349e" stroke-width="1.1"/>
<line x1="70.45" y1="447.50" x2="73.05" y2="447.50" stroke="#3aa0b0" stroke-width="1.0"/>
<line x1="83.20" y1="441.50" x2="85.80" y2="441.50" stroke="#a0349e" stroke-width="1.1"/>
<line x1="83.20" y1="443.40" x2="85.80" y2="443.40" stroke="#3aa0b0" stroke-width="1.0"/>
<line x1="89.60" y1="449.40" x2="92.20" y2="449.40" stroke="#a0349e" stroke-width="1.1"/>
<line x1="89.60" y1="451.30" x2="92.20" y2="451.30" stroke="#3aa0b0" stroke-width="1.0"/>
<line x1="94.45" y1="449.40" x2="97.05" y2="449.40" stroke="#a0349e" stroke-width="1.1"/>
<line x1="94.45" y1="451.30" x2="97.05" y2="451.30" stroke="#3aa0b0" stroke-width="1.0"/>
<line x1="98.20" y1="449.40" x2="100.80" y2="449.40" stroke="#a0349e" stroke-width="1.1"/>
<line x1="98.20" y1="451.30" x2="100.80" y2="451.30" stroke="#3aa0b0" stroke-width="1.0"/>
<line x1="107.10" y1="445.60" x2="109.70" y2="445.60" stroke="#a0349e" stroke-width="1.1"/>
<line x1="107.10" y1="447.50" x2="109.70" y2="447.50" stroke="#3aa0b0" stroke-width="1.0"/>
<line x1="118.20" y1="449.40" x2="120.80" y2="449.40" stroke="#a0349e" stroke-width="1.1"/>
<line x1="118.20" y1="451.30" x2="120.80" y2="451.30" stroke="#3aa0b0" stroke-width="1.0"/>
<line x1="125.20" y1="445.60" x2="127.80" y2="445.60" stroke="#a0349e" stroke-width="1.1"/>
<line x1="125.20" y1="447.50" x2="127.80" y2="447.50" stroke="#3aa0b0" stroke-width="1.0"/>
<line x1="132.30" y1="449.40" x2="134.90" y2="449.40" stroke="#a0349e" stroke-width="1.1"/>
<line x1="132.30" y1="451.30" x2="134.90" y2="451.30" stroke="#3aa0b0" stroke-width="1.0"/>
<line x1="135.20" y1="445.60" x2="137.80" y2="445.60" stroke="#a0349e" stroke-width="1.1"/>
<line x1="135.20" y1="447.50" x2="137.80" y2="447.50" stroke="#3aa0b0" stroke-width="1.0"/>
<line x1="141.10" y1="445.60" x2="143.70" y2="445.60" stroke="#a0349e" stroke-width="1.1"/>
<line x1="141.10" y1="447.50" x2="143.70" y2="447.50" stroke="#3aa0b0" stroke-width="1.0"/>
<line x1="148.60" y1="445.60" x2="151.20" y2="445.60" stroke="#a0349e" stroke-width="1.1"/>
<line x1="148.60" y1="447.50" x2="151.20" y2="447.50" stroke="#3aa0b0" stroke-width="1.0"/>
<line x1="155.45" y1="441.50" x2="158.05" y2="441.50" stroke="#a0349e" stroke-width="1.1"/>
<line x1="155.45" y1="443.40" x2="158.05" y2="443.40" stroke="#3aa0b0" stroke-width="1.0"/>
<line x1="162.10" y1="449.40" x2="164.70" y2="449.40" stroke="#a0349e" stroke-width="1.1"/>
<line x1="162.10" y1="451.30" x2="164.70" y2="451.30" stroke="#3aa0b0" stroke-width="1.0"/>
<line x1="171.10" y1="441.50" x2="173.70" y2="441.50" stroke="#a0349e" stroke-width="1.1"/>
<line x1="171.10" y1="443.40" x2="173.70" y2="443.40" stroke="#3aa0b0" stroke-width="1.0"/>
<line x1="179.20" y1="445.60" x2="181.80" y2="445.60" stroke="#a0349e" stroke-width="1.1"/>
<line x1="179.20" y1="447.50" x2="181.80" y2="447.50" stroke="#3aa0b0" stroke-width="1.0"/>
<line x1="184.80" y1="445.60" x2="187.40" y2="445.60" stroke="#a0349e" stroke-width="1.1"/>
<line x1="184.80" y1="447.50" x2="187.40" y2="447.50" stroke="#3aa0b0" stroke-width="1.0"/>
<line x1="187.30" y1="449.40" x2="189.90" y2="449.40" stroke="#a0349e" stroke-width="1.1"/>
<line x1="187.30" y1="451.30" x2="189.90" y2="451.30" stroke="#3aa0b0" stroke-width="1.0"/>
<line x1="193.60" y1="449.40" x2="196.20" y2="449.40" stroke="#a0349e" stroke-width="1.1"/>
<line x1="193.60" y1="451.30" x2="196.20" y2="451.30" stroke="#3aa0b0" stroke-width="1.0"/>
<line x1="204.20" y1="445.60" x2="206.80" y2="445.60" stroke="#a0349e" stroke-width="1.1"/>
<line x1="204.20" y1="447.50" x2="206.80" y2="447.50" stroke="#3aa0b0" stroke-width="1.0"/>
<line x1="209.45" y1="449.40" x2="212.05" y2="449.40" stroke="#a0349e" stroke-width="1.1"/>
<line x1="209.45" y1="451.30" x2="212.05" y2="451.30" stroke="#3aa0b0" stroke-width="1.0"/>
<line x1="121.95" y1="436.30" x2="124.55" y2="436.30" stroke="#3a67d8" stroke-width="1.0"/>
<line x1="121.95" y1="437.60" x2="124.55" y2="437.60" stroke="#d0338e" stroke-width="0.9"/>
<line x1="121.95" y1="439.20" x2="124.55" y2="439.20" stroke="#3aa0b0" stroke-width="1.0"/>
<rect x="214.25" y="445.00" width="4.75" height="4.60" fill="#3aa0b0"/>
<line x1="27.50" y1="486.90" x2="38.50" y2="486.90" stroke="#3aa0b0" stroke-width="1.3"/>
<rect x="36.50" y="484.40" width="5.00" height="5.00" fill="#3aa0b0"/>
<text x="48.50" y="490.90" font-size="8.6" fill="#3c4043" letter-spacing="-0.15">50%: 183.22ms</text>
<line x1="125.30" y1="486.90" x2="136.30" y2="486.90" stroke="#d0338e" stroke-width="1.3"/>
<path d="M136.80,483.77 L139.93,486.90 L136.80,490.02 L133.68,486.90 Z" fill="#d0338e"/>
<text x="146.30" y="490.90" font-size="8.6" fill="#3c4043" letter-spacing="-0.15">95%: 191.07ms</text>
<line x1="27.50" y1="502.40" x2="38.50" y2="502.40" stroke="#3a67d8" stroke-width="1.3"/>
<circle cx="39.00" cy="502.40" r="2.5" fill="#3a67d8"/>
<text x="48.50" y="506.40" font-size="8.6" fill="#3c4043" letter-spacing="-0.15">99%: 191.77ms</text>
<text x="290.40" y="403.10" font-size="10.4" fill="#202124" textLength="132.2" lengthAdjust="spacingAndGlyphs">Billable container instance time</text>
<circle cx="438.09999999999997" cy="400.0" r="4.6" fill="#000"/>
<path d="M436.50,399.00 a1.60,1.60 0 1 1 2.40,1.35 c-0.6,0.4 -0.8,0.6 -0.8,1.3" fill="none" stroke="#fff" stroke-width="1.10"/>
<circle cx="438.10" cy="402.50" r="0.65" fill="#fff"/>
<circle cx="496.79999999999995" cy="396.20" r="1.3" fill="#5f6368"/>
<circle cx="496.79999999999995" cy="400.00" r="1.3" fill="#5f6368"/>
<circle cx="496.79999999999995" cy="403.80" r="1.3" fill="#5f6368"/>
<line x1="286.90" y1="421.80" x2="478.70" y2="421.80" stroke="#e6e6e6" stroke-width="0.8"/>
<line x1="286.90" y1="466.20" x2="480.20" y2="466.20" stroke="#9aa0a6" stroke-width="0.9"/>
<text x="483.70" y="423.50" font-size="6.35" fill="#5f6368">0.01s/s</text>
<text x="483.70" y="467.90" font-size="6.35" fill="#5f6368">0</text>
<line x1="352.00" y1="466.20" x2="352.00" y2="469.20" stroke="#9aa0a6" stroke-width="0.6"/>
<text x="352.00" y="476.30" font-size="6.35" fill="#5f6368" text-anchor="middle">Aug 28</text>
<line x1="400.20" y1="466.20" x2="400.20" y2="469.20" stroke="#9aa0a6" stroke-width="0.6"/>
<text x="400.20" y="476.30" font-size="6.35" fill="#5f6368" text-anchor="middle">6:00 AM</text>
<line x1="448.30" y1="466.20" x2="448.30" y2="469.20" stroke="#9aa0a6" stroke-width="0.6"/>
<text x="448.30" y="476.30" font-size="6.35" fill="#5f6368" text-anchor="middle">12:00 PM</text>
<text x="286.90" y="476.30" font-size="6.35" fill="#5f6368">UTC+10</text>
<polyline points="286.90,462.60 287.63,458.84 288.36,463.09 289.09,459.94 289.82,465.40 290.55,460.28 291.28,463.58 292.01,462.85 292.74,456.79 293.47,463.53 294.20,459.64 294.93,462.55 295.66,465.40 296.39,464.57 297.12,460.17 297.85,465.40 298.58,463.69 299.31,462.99 300.04,464.31 300.77,458.90 301.50,464.48 302.23,458.23 302.96,464.21 303.69,463.95 304.42,465.40 305.15,464.44 305.88,463.51 306.61,462.78 307.34,462.80 308.07,465.40 308.80,459.71 309.53,465.40 310.26,461.61 310.99,464.55 311.72,458.49 312.45,463.24 313.18,462.98 313.91,460.71 314.64,462.73 315.37,460.61 316.10,464.13 316.83,465.40 317.56,465.40 318.29,464.39 319.02,464.56 319.75,458.11 320.48,456.29 321.21,456.12 321.94,463.69 322.67,463.65 323.40,464.58 324.13,457.35 324.86,463.27 325.59,459.59 326.32,464.05 327.05,458.38 327.78,463.05 328.51,462.82 329.24,463.55 329.97,458.45 330.70,465.40 331.43,464.60 332.16,465.40 332.89,457.00 333.62,460.93 334.35,463.08 335.08,462.86 335.81,459.14 336.54,462.97 337.27,463.76 338.00,465.40 338.73,465.40 339.46,463.41 340.19,464.67 340.92,463.61 341.65,465.40 342.38,464.49 343.11,465.40 343.84,464.63 344.57,463.01 345.30,463.95 346.03,458.41 346.76,465.40 347.49,465.40 348.22,462.25 348.95,464.25 349.68,463.90 350.41,462.95 351.14,463.31 351.87,464.51 352.60,465.40 353.33,459.20 354.06,463.46 354.79,465.40 355.52,465.40 356.25,462.88 356.98,456.92 357.71,463.56 358.44,464.18 359.17,462.88 359.90,465.40 360.63,464.17 361.36,465.40 362.09,463.86 362.82,456.34 363.55,456.42 364.28,457.49 365.01,463.24 365.74,464.26 366.47,465.40 367.20,464.24 367.93,463.50 368.66,465.40 369.39,463.06 370.12,464.77 370.85,457.27 371.58,462.85 372.31,460.39 373.04,463.26 373.77,459.94 374.50,464.16 375.23,462.00 375.96,465.40 376.69,465.40 377.42,465.40 378.15,462.12 378.88,465.40 379.61,465.40 380.34,456.27 381.07,465.40 381.80,463.25 382.53,463.73 383.26,463.83 383.99,463.22 384.72,462.84 385.45,462.70 386.18,463.38 386.91,465.40 387.64,464.78 388.37,463.72 389.10,464.09 389.83,460.31 390.56,464.28 391.29,465.40 392.02,459.56 392.75,461.61 393.48,457.46 394.21,459.05 394.94,463.24 395.67,465.40 396.40,456.64 397.13,463.07 397.86,463.87 398.59,460.89 399.32,461.14 400.05,464.61 400.78,459.62 401.51,463.63 402.24,459.40 402.97,462.71 403.70,463.61 404.43,464.54 405.16,465.40 405.89,462.81 406.62,464.74 407.35,461.62 408.08,463.83 408.81,465.40 409.54,465.40 410.27,465.40 411.00,462.96 411.73,464.62 412.46,462.17 413.19,459.42 413.92,464.43 414.65,465.40 415.38,464.33 416.11,464.46 416.84,465.40 417.57,465.40 418.30,460.89 419.03,459.42 419.76,461.05 420.49,465.40 421.22,465.40 421.95,465.40 422.68,465.40 423.41,465.40 424.14,465.40 424.87,465.40 425.60,465.40 426.33,465.40 427.06,465.40 427.79,465.40 428.52,462.97 429.25,465.40 429.98,459.77 430.71,460.63 431.44,463.30 432.17,465.40 432.90,465.40 433.63,465.40 434.36,464.76 435.09,459.21 435.82,462.16 436.55,461.64 437.28,463.33 438.01,461.29 438.74,465.40 439.47,464.50 440.20,464.31 440.93,460.82 441.66,459.88 442.39,462.66 443.12,463.84 443.85,461.05 444.58,463.22 445.31,465.40 446.04,463.13 446.77,460.08 447.50,465.40 448.23,464.28 448.96,462.15 449.69,463.97 450.42,459.77 451.15,465.40 451.88,460.54 452.61,463.78 453.34,463.91 454.07,465.40 454.80,465.40 455.53,461.66 456.26,461.46 456.99,462.38 457.72,465.40 458.45,464.34 459.18,460.70 459.91,465.40 460.64,465.40 461.37,463.28 462.10,462.55 462.83,463.54 463.56,461.87 464.29,460.33 465.02,463.12 465.75,465.40 466.48,464.10 467.21,460.54 467.94,465.40 468.67,461.46 469.40,465.40 470.13,460.44 470.86,460.85 471.59,465.40 472.32,460.29 473.05,463.08 473.78,462.94 474.51,465.40 475.24,461.67 475.97,436.80 476.70,465.40" fill="none" stroke="#3a67d8" stroke-width="0.75" stroke-linejoin="round"/>
<circle cx="476.70" cy="462.60" r="2.3" fill="#3a67d8"/>
<line x1="284.40" y1="486.90" x2="295.40" y2="486.90" stroke="#3a67d8" stroke-width="1.2"/>
<circle cx="295.90" cy="486.90" r="2.4" fill="#3a67d8"/>
<rect x="303.80" y="482.20" width="112.90" height="10.30" fill="#00a1e6"/>
<text x="417.90" y="490.90" font-size="8.6" fill="#3c4043" letter-spacing="-0.15">: 0.0007s/s</text>
<text x="546.70" y="403.10" font-size="10.4" fill="#202124" textLength="105.0" lengthAdjust="spacingAndGlyphs">Container CPU utilization</text>
<circle cx="667.2" cy="400.0" r="4.6" fill="#000"/>
<path d="M665.60,399.00 a1.60,1.60 0 1 1 2.40,1.35 c-0.6,0.4 -0.8,0.6 -0.8,1.3" fill="none" stroke="#fff" stroke-width="1.10"/>
<circle cx="667.20" cy="402.50" r="0.65" fill="#fff"/>
<circle cx="753.1" cy="396.20" r="1.3" fill="#5f6368"/>
<circle cx="753.1" cy="400.00" r="1.3" fill="#5f6368"/>
<circle cx="753.1" cy="403.80" r="1.3" fill="#5f6368"/>
<line x1="543.20" y1="421.80" x2="735.00" y2="421.80" stroke="#e6e6e6" stroke-width="0.8"/>
<line x1="543.20" y1="466.20" x2="736.50" y2="466.20" stroke="#9aa0a6" stroke-width="0.9"/>
<text x="740.00" y="423.50" font-size="6.35" fill="#5f6368">20%</text>
<text x="740.00" y="467.90" font-size="6.35" fill="#5f6368">0</text>
<line x1="608.30" y1="466.20" x2="608.30" y2="469.20" stroke="#9aa0a6" stroke-width="0.6"/>
<text x="608.30" y="476.30" font-size="6.35" fill="#5f6368" text-anchor="middle">Aug 28</text>
<line x1="656.50" y1="466.20" x2="656.50" y2="469.20" stroke="#9aa0a6" stroke-width="0.6"/>
<text x="656.50" y="476.30" font-size="6.35" fill="#5f6368" text-anchor="middle">6:00 AM</text>
<line x1="704.60" y1="466.20" x2="704.60" y2="469.20" stroke="#9aa0a6" stroke-width="0.6"/>
<text x="704.60" y="476.30" font-size="6.35" fill="#5f6368" text-anchor="middle">12:00 PM</text>
<text x="543.20" y="476.30" font-size="6.35" fill="#5f6368">UTC+10</text>
<rect x="543.20" y="463.80" width="8.80" height="2.20" fill="#a3b0e8"/>
<line x1="543.20" y1="463.20" x2="552.00" y2="463.20" stroke="#d0338e" stroke-width="1.2"/>
<rect x="553.60" y="463.80" width="4.00" height="2.20" fill="#a3b0e8"/>
<line x1="553.60" y1="463.20" x2="557.60" y2="463.20" stroke="#d0338e" stroke-width="1.2"/>
<rect x="559.20" y="463.80" width="14.80" height="2.20" fill="#a3b0e8"/>
<line x1="559.20" y1="463.20" x2="574.00" y2="463.20" stroke="#d0338e" stroke-width="1.2"/>
<rect x="575.60" y="463.80" width="7.00" height="2.20" fill="#a3b0e8"/>
<line x1="575.60" y1="463.20" x2="582.60" y2="463.20" stroke="#d0338e" stroke-width="1.2"/>
<rect x="584.20" y="463.80" width="10.40" height="2.20" fill="#a3b0e8"/>
<line x1="584.20" y1="463.20" x2="594.60" y2="463.20" stroke="#d0338e" stroke-width="1.2"/>
<rect x="596.20" y="463.80" width="10.80" height="2.20" fill="#a3b0e8"/>
<line x1="596.20" y1="463.20" x2="607.00" y2="463.20" stroke="#d0338e" stroke-width="1.2"/>
<rect x="608.60" y="463.80" width="21.60" height="2.20" fill="#a3b0e8"/>
<line x1="608.60" y1="463.20" x2="630.20" y2="463.20" stroke="#d0338e" stroke-width="1.2"/>
<rect x="631.80" y="463.80" width="13.20" height="2.20" fill="#a3b0e8"/>
<line x1="631.80" y1="463.20" x2="645.00" y2="463.20" stroke="#d0338e" stroke-width="1.2"/>
<rect x="646.60" y="463.80" width="7.40" height="2.20" fill="#a3b0e8"/>
<line x1="646.60" y1="463.20" x2="654.00" y2="463.20" stroke="#d0338e" stroke-width="1.2"/>
<rect x="655.60" y="463.80" width="4.40" height="2.20" fill="#a3b0e8"/>
<line x1="655.60" y1="463.20" x2="660.00" y2="463.20" stroke="#d0338e" stroke-width="1.2"/>
<rect x="661.80" y="463.80" width="18.20" height="2.20" fill="#a3b0e8"/>
<line x1="661.80" y1="463.20" x2="680.00" y2="463.20" stroke="#d0338e" stroke-width="1.2"/>
<rect x="685.00" y="463.80" width="12.00" height="2.20" fill="#a3b0e8"/>
<line x1="685.00" y1="463.20" x2="697.00" y2="463.20" stroke="#d0338e" stroke-width="1.2"/>
<rect x="698.60" y="463.80" width="6.40" height="2.20" fill="#a3b0e8"/>
<line x1="698.60" y1="463.20" x2="705.00" y2="463.20" stroke="#d0338e" stroke-width="1.2"/>
<rect x="706.40" y="463.80" width="8.60" height="2.20" fill="#a3b0e8"/>
<line x1="706.40" y1="463.20" x2="715.00" y2="463.20" stroke="#d0338e" stroke-width="1.2"/>
<rect x="719.00" y="463.80" width="8.00" height="2.20" fill="#a3b0e8"/>
<line x1="719.00" y1="463.20" x2="727.00" y2="463.20" stroke="#d0338e" stroke-width="1.2"/>
<rect x="728.60" y="463.80" width="4.90" height="2.20" fill="#a3b0e8"/>
<line x1="728.60" y1="463.20" x2="733.50" y2="463.20" stroke="#d0338e" stroke-width="1.2"/>
<polyline points="553.20,463.40 554.00,459.70 554.80,463.40" fill="none" stroke="#d0338e" stroke-width="0.9" stroke-linejoin="round"/>
<polyline points="570.70,463.40 571.50,459.70 572.30,463.40" fill="none" stroke="#d0338e" stroke-width="0.9" stroke-linejoin="round"/>
<polyline points="620.70,463.40 621.50,459.70 622.30,463.40" fill="none" stroke="#d0338e" stroke-width="0.9" stroke-linejoin="round"/>
<polyline points="648.20,463.40 649.00,460.20 649.80,463.40" fill="none" stroke="#3a67d8" stroke-width="0.9" stroke-linejoin="round"/>
<polyline points="668.70,463.40 669.50,460.20 670.30,463.40" fill="none" stroke="#d0338e" stroke-width="0.9" stroke-linejoin="round"/>
<polyline points="700.20,463.40 701.00,460.20 701.80,463.40" fill="none" stroke="#3a67d8" stroke-width="0.9" stroke-linejoin="round"/>
<polyline points="685.00,463.70 685.40,450.00 686.20,463.70" fill="none" stroke="#d0338e" stroke-width="1.0" stroke-linejoin="round"/>
<polyline points="707.00,463.70 707.60,436.90 708.40,463.70" fill="none" stroke="#3a67d8" stroke-width="1.0" stroke-linejoin="round"/>
<circle cx="734.60" cy="464.90" r="2.4" fill="#3a67d8"/>
<line x1="540.70" y1="486.90" x2="551.70" y2="486.90" stroke="#3a67d8" stroke-width="1.3"/>
<circle cx="552.20" cy="486.90" r="2.5" fill="#3a67d8"/>
<text x="561.70" y="490.90" font-size="8.6" fill="#3c4043" letter-spacing="-0.15">50%: 0.5%</text>
<line x1="637.70" y1="486.90" x2="648.70" y2="486.90" stroke="#d0338e" stroke-width="1.3"/>
<path d="M649.20,483.77 L652.33,486.90 L649.20,490.02 L646.08,486.90 Z" fill="#d0338e"/>
<text x="658.70" y="490.90" font-size="8.6" fill="#3c4043" letter-spacing="-0.15">95%: 0.95%</text>
<line x1="540.70" y1="502.40" x2="551.70" y2="502.40" stroke="#3aa0b0" stroke-width="1.3"/>
<rect x="549.70" y="499.90" width="5.00" height="5.00" fill="#3aa0b0"/>
<text x="561.70" y="506.40" font-size="8.6" fill="#3c4043" letter-spacing="-0.15">99%: 0.99%</text>
<text x="33.50" y="555.70" font-size="10.4" fill="#202124" textLength="122.1" lengthAdjust="spacingAndGlyphs">Container memory utilization</text>
<circle cx="171.1" cy="552.5999999999999" r="4.6" fill="#000"/>
<path d="M169.50,551.60 a1.60,1.60 0 1 1 2.40,1.35 c-0.6,0.4 -0.8,0.6 -0.8,1.3" fill="none" stroke="#fff" stroke-width="1.10"/>
<circle cx="171.10" cy="555.10" r="0.65" fill="#fff"/>
<circle cx="239.9" cy="548.80" r="1.3" fill="#5f6368"/>
<circle cx="239.9" cy="552.60" r="1.3" fill="#5f6368"/>
<circle cx="239.9" cy="556.40" r="1.3" fill="#5f6368"/>
<line x1="30.00" y1="574.40" x2="221.80" y2="574.40" stroke="#e6e6e6" stroke-width="0.8"/>
<line x1="30.00" y1="596.60" x2="221.80" y2="596.60" stroke="#e6e6e6" stroke-width="0.8"/>
<text x="226.80" y="598.30" font-size="6.35" fill="#5f6368">2%</text>
<line x1="30.00" y1="618.80" x2="223.30" y2="618.80" stroke="#9aa0a6" stroke-width="0.9"/>
<text x="226.80" y="576.10" font-size="6.35" fill="#5f6368">4%</text>
<text x="226.80" y="620.50" font-size="6.35" fill="#5f6368">0</text>
<line x1="95.10" y1="618.80" x2="95.10" y2="621.80" stroke="#9aa0a6" stroke-width="0.6"/>
<text x="95.10" y="628.90" font-size="6.35" fill="#5f6368" text-anchor="middle">Aug 28</text>
<line x1="143.30" y1="618.80" x2="143.30" y2="621.80" stroke="#9aa0a6" stroke-width="0.6"/>
<text x="143.30" y="628.90" font-size="6.35" fill="#5f6368" text-anchor="middle">6:00 AM</text>
<line x1="191.40" y1="618.80" x2="191.40" y2="621.80" stroke="#9aa0a6" stroke-width="0.6"/>
<text x="191.40" y="628.90" font-size="6.35" fill="#5f6368" text-anchor="middle">12:00 PM</text>
<text x="30.00" y="628.90" font-size="6.35" fill="#5f6368">UTC+10</text>
<line x1="29.90" y1="586.10" x2="39.25" y2="586.10" stroke="#3d7fcf" stroke-width="1.6"/>
<line x1="29.90" y1="591.25" x2="39.25" y2="591.25" stroke="#d0338e" stroke-width="1.1"/>
<line x1="41.10" y1="586.10" x2="44.25" y2="586.10" stroke="#3d7fcf" stroke-width="1.6"/>
<line x1="41.10" y1="591.25" x2="44.25" y2="591.25" stroke="#d0338e" stroke-width="1.1"/>
<line x1="46.10" y1="586.10" x2="56.75" y2="586.10" stroke="#3d7fcf" stroke-width="1.6"/>
<line x1="46.10" y1="591.25" x2="56.75" y2="591.25" stroke="#d0338e" stroke-width="1.1"/>
<line x1="58.40" y1="586.10" x2="59.90" y2="586.10" stroke="#3d7fcf" stroke-width="1.6"/>
<line x1="58.40" y1="591.25" x2="59.90" y2="591.25" stroke="#d0338e" stroke-width="1.1"/>
<line x1="62.75" y1="586.10" x2="70.50" y2="586.10" stroke="#3d7fcf" stroke-width="1.6"/>
<line x1="62.75" y1="591.25" x2="70.50" y2="591.25" stroke="#d0338e" stroke-width="1.1"/>
<line x1="71.50" y1="586.10" x2="82.40" y2="586.10" stroke="#3d7fcf" stroke-width="1.6"/>
<line x1="71.50" y1="591.25" x2="82.40" y2="591.25" stroke="#d0338e" stroke-width="1.1"/>
<line x1="84.25" y1="586.10" x2="94.00" y2="586.10" stroke="#3d7fcf" stroke-width="1.6"/>
<line x1="84.25" y1="591.25" x2="94.00" y2="591.25" stroke="#d0338e" stroke-width="1.1"/>
<line x1="96.10" y1="586.10" x2="107.00" y2="586.10" stroke="#3d7fcf" stroke-width="1.6"/>
<line x1="96.10" y1="591.25" x2="107.00" y2="591.25" stroke="#d0338e" stroke-width="1.1"/>
<line x1="108.60" y1="586.10" x2="117.75" y2="586.10" stroke="#3d7fcf" stroke-width="1.6"/>
<line x1="108.60" y1="591.25" x2="117.75" y2="591.25" stroke="#d0338e" stroke-width="1.1"/>
<line x1="119.25" y1="586.10" x2="131.75" y2="586.10" stroke="#3d7fcf" stroke-width="1.6"/>
<line x1="119.25" y1="591.25" x2="131.75" y2="591.25" stroke="#d0338e" stroke-width="1.1"/>
<line x1="133.60" y1="586.10" x2="140.25" y2="586.10" stroke="#3d7fcf" stroke-width="1.6"/>
<line x1="133.60" y1="591.25" x2="140.25" y2="591.25" stroke="#d0338e" stroke-width="1.1"/>
<line x1="142.00" y1="586.10" x2="147.40" y2="586.10" stroke="#3d7fcf" stroke-width="1.6"/>
<line x1="142.00" y1="591.25" x2="147.40" y2="591.25" stroke="#d0338e" stroke-width="1.1"/>
<line x1="149.90" y1="586.10" x2="166.10" y2="586.10" stroke="#3d7fcf" stroke-width="1.6"/>
<line x1="149.90" y1="591.25" x2="166.10" y2="591.25" stroke="#d0338e" stroke-width="1.1"/>
<line x1="172.75" y1="586.10" x2="184.25" y2="586.10" stroke="#3d7fcf" stroke-width="1.6"/>
<line x1="172.75" y1="591.25" x2="184.25" y2="591.25" stroke="#d0338e" stroke-width="1.1"/>
<line x1="186.10" y1="586.10" x2="192.40" y2="586.10" stroke="#3d7fcf" stroke-width="1.6"/>
<line x1="186.10" y1="591.25" x2="192.40" y2="591.25" stroke="#d0338e" stroke-width="1.1"/>
<line x1="194.90" y1="586.10" x2="201.75" y2="586.10" stroke="#3d7fcf" stroke-width="1.6"/>
<line x1="194.90" y1="591.25" x2="201.75" y2="591.25" stroke="#d0338e" stroke-width="1.1"/>
<line x1="206.10" y1="586.10" x2="214.90" y2="586.10" stroke="#3d7fcf" stroke-width="1.6"/>
<line x1="206.10" y1="591.25" x2="214.90" y2="591.25" stroke="#d0338e" stroke-width="1.1"/>
<line x1="217.00" y1="586.10" x2="218.60" y2="586.10" stroke="#3d7fcf" stroke-width="1.6"/>
<line x1="217.00" y1="591.25" x2="218.60" y2="591.25" stroke="#d0338e" stroke-width="1.1"/>
<line x1="220.20" y1="586.10" x2="222.00" y2="586.10" stroke="#3d7fcf" stroke-width="1.6"/>
<line x1="220.20" y1="591.25" x2="222.00" y2="591.25" stroke="#d0338e" stroke-width="1.1"/>
<polyline points="195.50,591.25 195.50,607.40" fill="none" stroke="#d0338e" stroke-width="0.9" stroke-linejoin="round"/>
<circle cx="222.20" cy="586.10" r="2.4" fill="#3a67d8"/>
<path d="M222.20,588.38 L225.07,591.25 L222.20,594.12 L219.32,591.25 Z" fill="#d0338e"/>
<line x1="27.50" y1="639.50" x2="38.50" y2="639.50" stroke="#d0338e" stroke-width="1.3"/>
<path d="M39.00,636.38 L42.12,639.50 L39.00,642.62 L35.88,639.50 Z" fill="#d0338e"/>
<text x="48.50" y="643.50" font-size="8.6" fill="#3c4043" letter-spacing="-0.15">50%: 2.5%</text>
<line x1="125.30" y1="639.50" x2="136.30" y2="639.50" stroke="#3a67d8" stroke-width="1.3"/>
<circle cx="136.80" cy="639.50" r="2.5" fill="#3a67d8"/>
<text x="146.30" y="643.50" font-size="8.6" fill="#3c4043" letter-spacing="-0.15">95%: 2.95%</text>
<line x1="27.50" y1="655.00" x2="38.50" y2="655.00" stroke="#3aa0b0" stroke-width="1.3"/>
<rect x="36.50" y="652.50" width="5.00" height="5.00" fill="#3aa0b0"/>
<text x="48.50" y="659.00" font-size="8.6" fill="#3c4043" letter-spacing="-0.15">99%: 2.99%</text>
<text x="290.40" y="555.70" font-size="10.4" fill="#202124" textLength="43.7" lengthAdjust="spacingAndGlyphs">Sent bytes</text>
<circle cx="349.59999999999997" cy="552.5999999999999" r="4.6" fill="#000"/>
<path d="M348.00,551.60 a1.60,1.60 0 1 1 2.40,1.35 c-0.6,0.4 -0.8,0.6 -0.8,1.3" fill="none" stroke="#fff" stroke-width="1.10"/>
<circle cx="349.60" cy="555.10" r="0.65" fill="#fff"/>
<circle cx="496.79999999999995" cy="548.80" r="1.3" fill="#5f6368"/>
<circle cx="496.79999999999995" cy="552.60" r="1.3" fill="#5f6368"/>
<circle cx="496.79999999999995" cy="556.40" r="1.3" fill="#5f6368"/>
<line x1="286.90" y1="574.40" x2="478.70" y2="574.40" stroke="#e6e6e6" stroke-width="0.8"/>
<line x1="286.90" y1="618.80" x2="480.20" y2="618.80" stroke="#9aa0a6" stroke-width="0.9"/>
<text x="483.70" y="576.10" font-size="6.35" fill="#5f6368">1/s</text>
<text x="483.70" y="620.50" font-size="6.35" fill="#5f6368">0</text>
<line x1="352.00" y1="618.80" x2="352.00" y2="621.80" stroke="#9aa0a6" stroke-width="0.6"/>
<text x="352.00" y="628.90" font-size="6.35" fill="#5f6368" text-anchor="middle">Aug 28</text>
<line x1="400.20" y1="618.80" x2="400.20" y2="621.80" stroke="#9aa0a6" stroke-width="0.6"/>
<text x="400.20" y="628.90" font-size="6.35" fill="#5f6368" text-anchor="middle">6:00 AM</text>
<line x1="448.30" y1="618.80" x2="448.30" y2="621.80" stroke="#9aa0a6" stroke-width="0.6"/>
<text x="448.30" y="628.90" font-size="6.35" fill="#5f6368" text-anchor="middle">12:00 PM</text>
<text x="286.90" y="628.90" font-size="6.35" fill="#5f6368">UTC+10</text>
<line x1="286.90" y1="618.50" x2="295.40" y2="618.50" stroke="#b0369a" stroke-width="1.3"/>
<line x1="297.00" y1="618.50" x2="301.00" y2="618.50" stroke="#b0369a" stroke-width="1.3"/>
<line x1="302.60" y1="618.50" x2="317.40" y2="618.50" stroke="#b0369a" stroke-width="1.3"/>
<line x1="319.00" y1="618.50" x2="350.40" y2="618.50" stroke="#b0369a" stroke-width="1.3"/>
<line x1="352.00" y1="618.50" x2="373.60" y2="618.50" stroke="#b0369a" stroke-width="1.3"/>
<line x1="375.20" y1="618.50" x2="388.40" y2="618.50" stroke="#b0369a" stroke-width="1.3"/>
<line x1="390.00" y1="618.50" x2="403.40" y2="618.50" stroke="#b0369a" stroke-width="1.3"/>
<line x1="405.20" y1="618.50" x2="423.40" y2="618.50" stroke="#b0369a" stroke-width="1.3"/>
<line x1="429.00" y1="618.50" x2="440.90" y2="618.50" stroke="#b0369a" stroke-width="1.3"/>
<line x1="442.80" y1="618.50" x2="449.00" y2="618.50" stroke="#b0369a" stroke-width="1.3"/>
<line x1="450.90" y1="618.50" x2="458.40" y2="618.50" stroke="#b0369a" stroke-width="1.3"/>
<line x1="462.80" y1="618.50" x2="469.40" y2="618.50" stroke="#b0369a" stroke-width="1.3"/>
<line x1="472.00" y1="618.50" x2="478.20" y2="618.50" stroke="#b0369a" stroke-width="1.3"/>
<path d="M478.20,615.62 L481.07,618.50 L478.20,621.38 L475.32,618.50 Z" fill="#d0338e"/>
<line x1="284.40" y1="639.50" x2="295.40" y2="639.50" stroke="#3a67d8" stroke-width="1.3"/>
<circle cx="295.90" cy="639.50" r="2.5" fill="#3a67d8"/>
<text x="305.40" y="643.50" font-size="8.6" fill="#3c4043" letter-spacing="-0.15">google: 0</text>
<line x1="391.15" y1="639.50" x2="402.15" y2="639.50" stroke="#3aa0b0" stroke-width="1.3"/>
<rect x="400.15" y="637.00" width="5.00" height="5.00" fill="#3aa0b0"/>
<text x="412.15" y="643.50" font-size="8.6" fill="#3c4043" letter-spacing="-0.15">internet: 0</text>
<line x1="284.40" y1="655.00" x2="295.40" y2="655.00" stroke="#d0338e" stroke-width="1.3"/>
<path d="M295.90,651.88 L299.02,655.00 L295.90,658.12 L292.77,655.00 Z" fill="#d0338e"/>
<text x="305.40" y="659.00" font-size="8.6" fill="#3c4043" letter-spacing="-0.15">private: 0</text>
<text x="546.70" y="555.70" font-size="10.4" fill="#202124" textLength="63.0" lengthAdjust="spacingAndGlyphs">Received bytes</text>
<circle cx="625.2" cy="552.5999999999999" r="4.6" fill="#000"/>
<path d="M623.60,551.60 a1.60,1.60 0 1 1 2.40,1.35 c-0.6,0.4 -0.8,0.6 -0.8,1.3" fill="none" stroke="#fff" stroke-width="1.10"/>
<circle cx="625.20" cy="555.10" r="0.65" fill="#fff"/>
<circle cx="753.1" cy="548.80" r="1.3" fill="#5f6368"/>
<circle cx="753.1" cy="552.60" r="1.3" fill="#5f6368"/>
<circle cx="753.1" cy="556.40" r="1.3" fill="#5f6368"/>
<line x1="543.20" y1="574.40" x2="735.00" y2="574.40" stroke="#e6e6e6" stroke-width="0.8"/>
<line x1="543.20" y1="618.80" x2="736.50" y2="618.80" stroke="#9aa0a6" stroke-width="0.9"/>
<text x="740.00" y="576.10" font-size="6.35" fill="#5f6368">1/s</text>
<text x="740.00" y="620.50" font-size="6.35" fill="#5f6368">0</text>
<line x1="608.30" y1="618.80" x2="608.30" y2="621.80" stroke="#9aa0a6" stroke-width="0.6"/>
<text x="608.30" y="628.90" font-size="6.35" fill="#5f6368" text-anchor="middle">Aug 28</text>
<line x1="656.50" y1="618.80" x2="656.50" y2="621.80" stroke="#9aa0a6" stroke-width="0.6"/>
<text x="656.50" y="628.90" font-size="6.35" fill="#5f6368" text-anchor="middle">6:00 AM</text>
<line x1="704.60" y1="618.80" x2="704.60" y2="621.80" stroke="#9aa0a6" stroke-width="0.6"/>
<text x="704.60" y="628.90" font-size="6.35" fill="#5f6368" text-anchor="middle">12:00 PM</text>
<text x="543.20" y="628.90" font-size="6.35" fill="#5f6368">UTC+10</text>
<line x1="543.20" y1="618.50" x2="551.70" y2="618.50" stroke="#b0369a" stroke-width="1.3"/>
<line x1="553.30" y1="618.50" x2="557.30" y2="618.50" stroke="#b0369a" stroke-width="1.3"/>
<line x1="558.90" y1="618.50" x2="573.70" y2="618.50" stroke="#b0369a" stroke-width="1.3"/>
<line x1="575.30" y1="618.50" x2="606.70" y2="618.50" stroke="#b0369a" stroke-width="1.3"/>
<line x1="608.30" y1="618.50" x2="629.90" y2="618.50" stroke="#b0369a" stroke-width="1.3"/>
<line x1="631.50" y1="618.50" x2="644.70" y2="618.50" stroke="#b0369a" stroke-width="1.3"/>
<line x1="646.30" y1="618.50" x2="659.70" y2="618.50" stroke="#b0369a" stroke-width="1.3"/>
<line x1="661.50" y1="618.50" x2="679.70" y2="618.50" stroke="#b0369a" stroke-width="1.3"/>
<line x1="685.30" y1="618.50" x2="697.20" y2="618.50" stroke="#b0369a" stroke-width="1.3"/>
<line x1="699.10" y1="618.50" x2="705.30" y2="618.50" stroke="#b0369a" stroke-width="1.3"/>
<line x1="707.20" y1="618.50" x2="714.70" y2="618.50" stroke="#b0369a" stroke-width="1.3"/>
<line x1="719.10" y1="618.50" x2="725.70" y2="618.50" stroke="#b0369a" stroke-width="1.3"/>
<line x1="728.30" y1="618.50" x2="734.50" y2="618.50" stroke="#b0369a" stroke-width="1.3"/>
<path d="M734.50,615.62 L737.38,618.50 L734.50,621.38 L731.62,618.50 Z" fill="#d0338e"/>
<line x1="540.70" y1="639.50" x2="551.70" y2="639.50" stroke="#3a67d8" stroke-width="1.3"/>
<circle cx="552.20" cy="639.50" r="2.5" fill="#3a67d8"/>
<text x="561.70" y="643.50" font-size="8.6" fill="#3c4043" letter-spacing="-0.15">google: 0</text>
<line x1="646.40" y1="639.50" x2="657.40" y2="639.50" stroke="#3aa0b0" stroke-width="1.3"/>
<rect x="655.40" y="637.00" width="5.00" height="5.00" fill="#3aa0b0"/>
<text x="667.40" y="643.50" font-size="8.6" fill="#3c4043" letter-spacing="-0.15">internet: 0</text>
<line x1="540.70" y1="655.00" x2="551.70" y2="655.00" stroke="#d0338e" stroke-width="1.3"/>
<path d="M552.20,651.88 L555.33,655.00 L552.20,658.12 L549.08,655.00 Z" fill="#d0338e"/>
<text x="561.70" y="659.00" font-size="8.6" fill="#3c4043" letter-spacing="-0.15">private: 0</text>
<text x="33.50" y="709.20" font-size="10.4" fill="#202124" textLength="105.5" lengthAdjust="spacingAndGlyphs">Max concurrent requests</text>
<circle cx="154.2" cy="706.0" r="4.6" fill="#000"/>
<path d="M152.60,705.00 a1.60,1.60 0 1 1 2.40,1.35 c-0.6,0.4 -0.8,0.6 -0.8,1.3" fill="none" stroke="#fff" stroke-width="1.10"/>
<circle cx="154.20" cy="708.50" r="0.65" fill="#fff"/>
<path d="M673.9,703.2 A3.7,3.7 0 1 1 674.6,707.3" fill="none" stroke="#3c4043" stroke-width="1.1"/>
<path d="M671.0,703.9 L674.6,701.6 L675.0,705.4 Z" fill="#3c4043"/>
<line x1="680.40" y1="707.60" x2="683.30" y2="710.60" stroke="#3c4043" stroke-width="1.3"/>
<line x1="697.20" y1="707.30" x2="707.60" y2="707.30" stroke="#3c4043" stroke-width="1.0"/>
<line x1="697.20" y1="710.20" x2="707.60" y2="710.20" stroke="#3c4043" stroke-width="1.0"/>
<path d="M697.2,705.0 L700.6,702.4 L703.6,704.2 L707.6,701.8" fill="none" stroke="#3c4043" stroke-width="1.0"/>
<path d="M723.6,704.3 v-2.0 h2.2 M729.9,702.3 h2.2 v2.0 M732.1,707.6 v2.0 h-2.2 M725.8,709.6 h-2.2 v-2.0" fill="none" stroke="#3c4043" stroke-width="1.1"/>
<circle cx="753.4" cy="702.00" r="1.1" fill="#3c4043"/>
<circle cx="753.4" cy="706.00" r="1.1" fill="#3c4043"/>
<circle cx="753.4" cy="710.00" r="1.1" fill="#3c4043"/>
<line x1="30.00" y1="728.40" x2="734.00" y2="728.40" stroke="#e6e6e6" stroke-width="0.8"/>
<line x1="30.00" y1="772.40" x2="735.00" y2="772.40" stroke="#9aa0a6" stroke-width="0.9"/>
<text x="739.40" y="729.90" font-size="6.35" fill="#5f6368">2</text>
<text x="739.40" y="774.20" font-size="6.35" fill="#5f6368">1</text>
<text x="30.00" y="782.80" font-size="6.35" fill="#5f6368">UTC+10</text>
<line x1="93.75" y1="772.40" x2="93.75" y2="775.40" stroke="#9aa0a6" stroke-width="0.6"/>
<text x="93.75" y="782.80" font-size="6.35" fill="#5f6368" text-anchor="middle">6:00 PM</text>
<line x1="152.50" y1="772.40" x2="152.50" y2="775.40" stroke="#9aa0a6" stroke-width="0.6"/>
<text x="152.50" y="782.80" font-size="6.35" fill="#5f6368" text-anchor="middle">8:00 PM</text>
<line x1="211.25" y1="772.40" x2="211.25" y2="775.40" stroke="#9aa0a6" stroke-width="0.6"/>
<text x="211.25" y="782.80" font-size="6.35" fill="#5f6368" text-anchor="middle">10:00 PM</text>
<line x1="270.00" y1="772.40" x2="270.00" y2="775.40" stroke="#9aa0a6" stroke-width="0.6"/>
<text x="270.00" y="782.80" font-size="6.35" fill="#5f6368" text-anchor="middle">Aug 28</text>
<line x1="328.75" y1="772.40" x2="328.75" y2="775.40" stroke="#9aa0a6" stroke-width="0.6"/>
<text x="328.75" y="782.80" font-size="6.35" fill="#5f6368" text-anchor="middle">2:00 AM</text>
<line x1="387.50" y1="772.40" x2="387.50" y2="775.40" stroke="#9aa0a6" stroke-width="0.6"/>
<text x="387.50" y="782.80" font-size="6.35" fill="#5f6368" text-anchor="middle">4:00 AM</text>
<line x1="446.25" y1="772.40" x2="446.25" y2="775.40" stroke="#9aa0a6" stroke-width="0.6"/>
<text x="446.25" y="782.80" font-size="6.35" fill="#5f6368" text-anchor="middle">6:00 AM</text>
<line x1="505.00" y1="772.40" x2="505.00" y2="775.40" stroke="#9aa0a6" stroke-width="0.6"/>
<text x="505.00" y="782.80" font-size="6.35" fill="#5f6368" text-anchor="middle">8:00 AM</text>
<line x1="563.75" y1="772.40" x2="563.75" y2="775.40" stroke="#9aa0a6" stroke-width="0.6"/>
<text x="563.75" y="782.80" font-size="6.35" fill="#5f6368" text-anchor="middle">10:00 AM</text>
<line x1="622.50" y1="772.40" x2="622.50" y2="775.40" stroke="#9aa0a6" stroke-width="0.6"/>
<text x="622.50" y="782.80" font-size="6.35" fill="#5f6368" text-anchor="middle">12:00 PM</text>
<line x1="681.25" y1="772.40" x2="681.25" y2="775.40" stroke="#9aa0a6" stroke-width="0.6"/>
<text x="681.25" y="782.80" font-size="6.35" fill="#5f6368" text-anchor="middle">2:00 PM</text>
<line x1="32.10" y1="728.80" x2="34.70" y2="728.80" stroke="#d0338e" stroke-width="1.1"/>
<line x1="32.10" y1="732.40" x2="34.70" y2="732.40" stroke="#3a67d8" stroke-width="1.1"/>
<line x1="41.70" y1="728.80" x2="44.30" y2="728.80" stroke="#d0338e" stroke-width="1.1"/>
<line x1="41.70" y1="732.40" x2="44.30" y2="732.40" stroke="#3a67d8" stroke-width="1.1"/>
<line x1="54.25" y1="728.80" x2="57.75" y2="728.80" stroke="#d0338e" stroke-width="1.1"/>
<line x1="54.25" y1="732.40" x2="57.75" y2="732.40" stroke="#3a67d8" stroke-width="1.1"/>
<line x1="80.45" y1="728.80" x2="83.05" y2="728.80" stroke="#d0338e" stroke-width="1.1"/>
<line x1="80.45" y1="732.40" x2="83.05" y2="732.40" stroke="#3a67d8" stroke-width="1.1"/>
<line x1="116.10" y1="728.80" x2="118.70" y2="728.80" stroke="#d0338e" stroke-width="1.1"/>
<line x1="116.10" y1="732.40" x2="118.70" y2="732.40" stroke="#3a67d8" stroke-width="1.1"/>
<line x1="122.30" y1="728.80" x2="124.90" y2="728.80" stroke="#d0338e" stroke-width="1.1"/>
<line x1="122.30" y1="732.40" x2="124.90" y2="732.40" stroke="#3a67d8" stroke-width="1.1"/>
<line x1="127.30" y1="728.80" x2="129.90" y2="728.80" stroke="#d0338e" stroke-width="1.1"/>
<line x1="127.30" y1="732.40" x2="129.90" y2="732.40" stroke="#3a67d8" stroke-width="1.1"/>
<line x1="139.20" y1="728.80" x2="141.80" y2="728.80" stroke="#d0338e" stroke-width="1.1"/>
<line x1="139.20" y1="732.40" x2="141.80" y2="732.40" stroke="#3a67d8" stroke-width="1.1"/>
<line x1="156.10" y1="728.80" x2="158.70" y2="728.80" stroke="#d0338e" stroke-width="1.1"/>
<line x1="156.10" y1="732.40" x2="158.70" y2="732.40" stroke="#3a67d8" stroke-width="1.1"/>
<line x1="164.20" y1="728.80" x2="166.80" y2="728.80" stroke="#d0338e" stroke-width="1.1"/>
<line x1="164.20" y1="732.40" x2="166.80" y2="732.40" stroke="#3a67d8" stroke-width="1.1"/>
<line x1="170.45" y1="728.80" x2="173.05" y2="728.80" stroke="#d0338e" stroke-width="1.1"/>
<line x1="170.45" y1="732.40" x2="173.05" y2="732.40" stroke="#3a67d8" stroke-width="1.1"/>
<line x1="187.00" y1="728.80" x2="191.50" y2="728.80" stroke="#d0338e" stroke-width="1.1"/>
<line x1="187.00" y1="732.40" x2="191.50" y2="732.40" stroke="#3a67d8" stroke-width="1.1"/>
<line x1="204.70" y1="728.80" x2="207.30" y2="728.80" stroke="#d0338e" stroke-width="1.1"/>
<line x1="204.70" y1="732.40" x2="207.30" y2="732.40" stroke="#3a67d8" stroke-width="1.1"/>
<line x1="209.70" y1="728.80" x2="212.30" y2="728.80" stroke="#d0338e" stroke-width="1.1"/>
<line x1="209.70" y1="732.40" x2="212.30" y2="732.40" stroke="#3a67d8" stroke-width="1.1"/>
<line x1="214.70" y1="728.80" x2="217.30" y2="728.80" stroke="#d0338e" stroke-width="1.1"/>
<line x1="214.70" y1="732.40" x2="217.30" y2="732.40" stroke="#3a67d8" stroke-width="1.1"/>
<line x1="222.30" y1="728.80" x2="224.90" y2="728.80" stroke="#d0338e" stroke-width="1.1"/>
<line x1="222.30" y1="732.40" x2="224.90" y2="732.40" stroke="#3a67d8" stroke-width="1.1"/>
<line x1="231.70" y1="728.80" x2="234.30" y2="728.80" stroke="#d0338e" stroke-width="1.1"/>
<line x1="231.70" y1="732.40" x2="234.30" y2="732.40" stroke="#3a67d8" stroke-width="1.1"/>
<line x1="240.45" y1="728.80" x2="243.05" y2="728.80" stroke="#d0338e" stroke-width="1.1"/>
<line x1="240.45" y1="732.40" x2="243.05" y2="732.40" stroke="#3a67d8" stroke-width="1.1"/>
<line x1="250.50" y1="728.80" x2="258.00" y2="728.80" stroke="#d0338e" stroke-width="1.1"/>
<line x1="250.50" y1="732.40" x2="258.00" y2="732.40" stroke="#3a67d8" stroke-width="1.1"/>
<line x1="263.20" y1="728.80" x2="265.80" y2="728.80" stroke="#d0338e" stroke-width="1.1"/>
<line x1="263.20" y1="732.40" x2="265.80" y2="732.40" stroke="#3a67d8" stroke-width="1.1"/>
<line x1="280.70" y1="728.80" x2="283.30" y2="728.80" stroke="#d0338e" stroke-width="1.1"/>
<line x1="280.70" y1="732.40" x2="283.30" y2="732.40" stroke="#3a67d8" stroke-width="1.1"/>
<line x1="291.75" y1="728.80" x2="296.25" y2="728.80" stroke="#d0338e" stroke-width="1.1"/>
<line x1="291.75" y1="732.40" x2="296.25" y2="732.40" stroke="#3a67d8" stroke-width="1.1"/>
<line x1="340.45" y1="728.80" x2="343.05" y2="728.80" stroke="#d0338e" stroke-width="1.1"/>
<line x1="340.45" y1="732.40" x2="343.05" y2="732.40" stroke="#3a67d8" stroke-width="1.1"/>
<line x1="349.20" y1="728.80" x2="351.80" y2="728.80" stroke="#d0338e" stroke-width="1.1"/>
<line x1="349.20" y1="732.40" x2="351.80" y2="732.40" stroke="#3a67d8" stroke-width="1.1"/>
<line x1="273.60" y1="729.70" x2="276.20" y2="729.70" stroke="#d0338e" stroke-width="1.1"/>
<line x1="273.60" y1="734.30" x2="276.20" y2="734.30" stroke="#3a67d8" stroke-width="1.1"/>
<polyline points="101.00,732.50 103.00,734.50 105.00,733.00 108.00,732.50" fill="none" stroke="#3a67d8" stroke-width="0.9" stroke-linejoin="round"/>
<polyline points="101.00,729.50 103.00,730.70 105.00,729.50 108.00,729.00" fill="none" stroke="#d0338e" stroke-width="0.9" stroke-linejoin="round"/>
<line x1="30.50" y1="772.30" x2="33.10" y2="772.30" stroke="#3aa0b0" stroke-width="1.1"/>
<line x1="38.50" y1="772.30" x2="41.10" y2="772.30" stroke="#3aa0b0" stroke-width="1.1"/>
<line x1="45.00" y1="772.30" x2="47.60" y2="772.30" stroke="#3aa0b0" stroke-width="1.1"/>
<line x1="52.50" y1="772.30" x2="55.10" y2="772.30" stroke="#3aa0b0" stroke-width="1.1"/>
<line x1="59.00" y1="772.30" x2="61.60" y2="772.30" stroke="#3aa0b0" stroke-width="1.1"/>
<line x1="67.00" y1="772.30" x2="69.60" y2="772.30" stroke="#3aa0b0" stroke-width="1.1"/>
<line x1="75.00" y1="772.30" x2="77.60" y2="772.30" stroke="#3aa0b0" stroke-width="1.1"/>
<line x1="81.50" y1="772.30" x2="84.10" y2="772.30" stroke="#3aa0b0" stroke-width="1.1"/>
<line x1="88.50" y1="772.30" x2="91.10" y2="772.30" stroke="#3aa0b0" stroke-width="1.1"/>
<line x1="95.00" y1="772.30" x2="97.60" y2="772.30" stroke="#3aa0b0" stroke-width="1.1"/>
<line x1="102.00" y1="772.30" x2="104.60" y2="772.30" stroke="#3aa0b0" stroke-width="1.1"/>
<line x1="108.50" y1="772.30" x2="111.10" y2="772.30" stroke="#3aa0b0" stroke-width="1.1"/>
<line x1="115.50" y1="772.30" x2="118.10" y2="772.30" stroke="#3aa0b0" stroke-width="1.1"/>
<line x1="122.50" y1="772.30" x2="125.10" y2="772.30" stroke="#3aa0b0" stroke-width="1.1"/>
<line x1="129.50" y1="772.30" x2="132.10" y2="772.30" stroke="#3aa0b0" stroke-width="1.1"/>
<line x1="136.00" y1="772.30" x2="138.60" y2="772.30" stroke="#3aa0b0" stroke-width="1.1"/>
<line x1="143.50" y1="772.30" x2="146.10" y2="772.30" stroke="#3aa0b0" stroke-width="1.1"/>
<line x1="151.00" y1="772.30" x2="153.60" y2="772.30" stroke="#3aa0b0" stroke-width="1.1"/>
<line x1="157.50" y1="772.30" x2="160.10" y2="772.30" stroke="#3aa0b0" stroke-width="1.1"/>
<line x1="164.00" y1="772.30" x2="166.60" y2="772.30" stroke="#3aa0b0" stroke-width="1.1"/>
<line x1="170.50" y1="772.30" x2="173.10" y2="772.30" stroke="#3aa0b0" stroke-width="1.1"/>
<line x1="177.50" y1="772.30" x2="180.10" y2="772.30" stroke="#3aa0b0" stroke-width="1.1"/>
<line x1="185.00" y1="772.30" x2="187.60" y2="772.30" stroke="#3aa0b0" stroke-width="1.1"/>
<line x1="191.50" y1="772.30" x2="194.10" y2="772.30" stroke="#3aa0b0" stroke-width="1.1"/>
<line x1="199.50" y1="772.30" x2="202.10" y2="772.30" stroke="#3aa0b0" stroke-width="1.1"/>
<line x1="206.50" y1="772.30" x2="209.10" y2="772.30" stroke="#3aa0b0" stroke-width="1.1"/>
<line x1="214.50" y1="772.30" x2="217.10" y2="772.30" stroke="#3aa0b0" stroke-width="1.1"/>
<line x1="221.00" y1="772.30" x2="223.60" y2="772.30" stroke="#3aa0b0" stroke-width="1.1"/>
<line x1="228.50" y1="772.30" x2="231.10" y2="772.30" stroke="#3aa0b0" stroke-width="1.1"/>
<line x1="235.00" y1="772.30" x2="237.60" y2="772.30" stroke="#3aa0b0" stroke-width="1.1"/>
<line x1="242.00" y1="772.30" x2="244.60" y2="772.30" stroke="#3aa0b0" stroke-width="1.1"/>
<line x1="248.50" y1="772.30" x2="251.10" y2="772.30" stroke="#3aa0b0" stroke-width="1.1"/>
<line x1="256.00" y1="772.30" x2="258.60" y2="772.30" stroke="#3aa0b0" stroke-width="1.1"/>
<line x1="262.50" y1="772.30" x2="265.10" y2="772.30" stroke="#3aa0b0" stroke-width="1.1"/>
<line x1="270.50" y1="772.30" x2="273.10" y2="772.30" stroke="#3aa0b0" stroke-width="1.1"/>
<line x1="278.50" y1="772.30" x2="281.10" y2="772.30" stroke="#3aa0b0" stroke-width="1.1"/>
<line x1="286.00" y1="772.30" x2="288.60" y2="772.30" stroke="#3aa0b0" stroke-width="1.1"/>
<line x1="292.50" y1="772.30" x2="295.10" y2="772.30" stroke="#3aa0b0" stroke-width="1.1"/>
<line x1="299.00" y1="772.30" x2="301.60" y2="772.30" stroke="#3aa0b0" stroke-width="1.1"/>
<line x1="305.50" y1="772.30" x2="308.10" y2="772.30" stroke="#3aa0b0" stroke-width="1.1"/>
<line x1="313.50" y1="772.30" x2="316.10" y2="772.30" stroke="#3aa0b0" stroke-width="1.1"/>
<line x1="320.50" y1="772.30" x2="323.10" y2="772.30" stroke="#3aa0b0" stroke-width="1.1"/>
<line x1="327.50" y1="772.30" x2="330.10" y2="772.30" stroke="#3aa0b0" stroke-width="1.1"/>
<line x1="334.50" y1="772.30" x2="337.10" y2="772.30" stroke="#3aa0b0" stroke-width="1.1"/>
<line x1="341.50" y1="772.30" x2="344.10" y2="772.30" stroke="#3aa0b0" stroke-width="1.1"/>
<line x1="349.50" y1="772.30" x2="352.10" y2="772.30" stroke="#3aa0b0" stroke-width="1.1"/>
<line x1="357.50" y1="772.30" x2="360.10" y2="772.30" stroke="#3aa0b0" stroke-width="1.1"/>
<line x1="364.50" y1="772.30" x2="367.10" y2="772.30" stroke="#3aa0b0" stroke-width="1.1"/>
<line x1="371.00" y1="772.30" x2="373.60" y2="772.30" stroke="#3aa0b0" stroke-width="1.1"/>
<line x1="379.00" y1="772.30" x2="381.60" y2="772.30" stroke="#3aa0b0" stroke-width="1.1"/>
<line x1="387.00" y1="772.30" x2="389.60" y2="772.30" stroke="#3aa0b0" stroke-width="1.1"/>
<line x1="393.50" y1="772.30" x2="396.10" y2="772.30" stroke="#3aa0b0" stroke-width="1.1"/>
<line x1="401.50" y1="772.30" x2="404.10" y2="772.30" stroke="#3aa0b0" stroke-width="1.1"/>
<line x1="408.00" y1="772.30" x2="410.60" y2="772.30" stroke="#3aa0b0" stroke-width="1.1"/>
<line x1="415.50" y1="772.30" x2="418.10" y2="772.30" stroke="#3aa0b0" stroke-width="1.1"/>
<line x1="423.00" y1="772.30" x2="425.60" y2="772.30" stroke="#3aa0b0" stroke-width="1.1"/>
<line x1="431.00" y1="772.30" x2="433.60" y2="772.30" stroke="#3aa0b0" stroke-width="1.1"/>
<line x1="438.00" y1="772.30" x2="440.60" y2="772.30" stroke="#3aa0b0" stroke-width="1.1"/>
<line x1="445.50" y1="772.30" x2="448.10" y2="772.30" stroke="#3aa0b0" stroke-width="1.1"/>
<line x1="453.50" y1="772.30" x2="456.10" y2="772.30" stroke="#3aa0b0" stroke-width="1.1"/>
<line x1="461.00" y1="772.30" x2="463.60" y2="772.30" stroke="#3aa0b0" stroke-width="1.1"/>
<line x1="469.00" y1="772.30" x2="471.60" y2="772.30" stroke="#3aa0b0" stroke-width="1.1"/>
<line x1="475.50" y1="772.30" x2="478.10" y2="772.30" stroke="#3aa0b0" stroke-width="1.1"/>
<line x1="483.00" y1="772.30" x2="485.60" y2="772.30" stroke="#3aa0b0" stroke-width="1.1"/>
<line x1="490.00" y1="772.30" x2="492.60" y2="772.30" stroke="#3aa0b0" stroke-width="1.1"/>
<line x1="497.50" y1="772.30" x2="500.10" y2="772.30" stroke="#3aa0b0" stroke-width="1.1"/>
<line x1="504.50" y1="772.30" x2="507.10" y2="772.30" stroke="#3aa0b0" stroke-width="1.1"/>
<line x1="512.50" y1="772.30" x2="515.10" y2="772.30" stroke="#3aa0b0" stroke-width="1.1"/>
<line x1="519.00" y1="772.30" x2="521.60" y2="772.30" stroke="#3aa0b0" stroke-width="1.1"/>
<line x1="526.50" y1="772.30" x2="529.10" y2="772.30" stroke="#3aa0b0" stroke-width="1.1"/>
<line x1="533.00" y1="772.30" x2="535.60" y2="772.30" stroke="#3aa0b0" stroke-width="1.1"/>
<line x1="540.00" y1="772.30" x2="542.60" y2="772.30" stroke="#3aa0b0" stroke-width="1.1"/>
<line x1="546.50" y1="772.30" x2="549.10" y2="772.30" stroke="#3aa0b0" stroke-width="1.1"/>
<line x1="554.00" y1="772.30" x2="556.60" y2="772.30" stroke="#3aa0b0" stroke-width="1.1"/>
<line x1="562.00" y1="772.30" x2="564.60" y2="772.30" stroke="#3aa0b0" stroke-width="1.1"/>
<line x1="569.00" y1="772.30" x2="571.60" y2="772.30" stroke="#3aa0b0" stroke-width="1.1"/>
<line x1="575.50" y1="772.30" x2="578.10" y2="772.30" stroke="#3aa0b0" stroke-width="1.1"/>
<line x1="582.50" y1="772.30" x2="585.10" y2="772.30" stroke="#3aa0b0" stroke-width="1.1"/>
<line x1="589.50" y1="772.30" x2="592.10" y2="772.30" stroke="#3aa0b0" stroke-width="1.1"/>
<line x1="597.50" y1="772.30" x2="600.10" y2="772.30" stroke="#3aa0b0" stroke-width="1.1"/>
<line x1="605.50" y1="772.30" x2="608.10" y2="772.30" stroke="#3aa0b0" stroke-width="1.1"/>
<line x1="613.50" y1="772.30" x2="616.10" y2="772.30" stroke="#3aa0b0" stroke-width="1.1"/>
<line x1="620.00" y1="772.30" x2="622.60" y2="772.30" stroke="#3aa0b0" stroke-width="1.1"/>
<line x1="626.50" y1="772.30" x2="629.10" y2="772.30" stroke="#3aa0b0" stroke-width="1.1"/>
<line x1="633.00" y1="772.30" x2="635.60" y2="772.30" stroke="#3aa0b0" stroke-width="1.1"/>
<line x1="640.50" y1="772.30" x2="643.10" y2="772.30" stroke="#3aa0b0" stroke-width="1.1"/>
<line x1="648.00" y1="772.30" x2="650.60" y2="772.30" stroke="#3aa0b0" stroke-width="1.1"/>
<line x1="654.50" y1="772.30" x2="657.10" y2="772.30" stroke="#3aa0b0" stroke-width="1.1"/>
<line x1="661.00" y1="772.30" x2="663.60" y2="772.30" stroke="#3aa0b0" stroke-width="1.1"/>
<line x1="668.50" y1="772.30" x2="671.10" y2="772.30" stroke="#3aa0b0" stroke-width="1.1"/>
<line x1="675.00" y1="772.30" x2="677.60" y2="772.30" stroke="#3aa0b0" stroke-width="1.1"/>
<line x1="681.50" y1="772.30" x2="684.10" y2="772.30" stroke="#3aa0b0" stroke-width="1.1"/>
<line x1="689.50" y1="772.30" x2="692.10" y2="772.30" stroke="#3aa0b0" stroke-width="1.1"/>
<line x1="696.50" y1="772.30" x2="699.10" y2="772.30" stroke="#3aa0b0" stroke-width="1.1"/>
<line x1="703.00" y1="772.30" x2="705.60" y2="772.30" stroke="#3aa0b0" stroke-width="1.1"/>
<line x1="710.50" y1="772.30" x2="713.10" y2="772.30" stroke="#3aa0b0" stroke-width="1.1"/>
<line x1="717.00" y1="772.30" x2="719.60" y2="772.30" stroke="#3aa0b0" stroke-width="1.1"/>
<line x1="724.50" y1="772.30" x2="727.10" y2="772.30" stroke="#3aa0b0" stroke-width="1.1"/>
<line x1="30.40" y1="728.50" x2="30.40" y2="733.00" stroke="#d0338e" stroke-width="1.0"/>
<line x1="30.40" y1="733.00" x2="30.40" y2="742.00" stroke="#3a67d8" stroke-width="0.9"/>
<line x1="57.40" y1="728.70" x2="57.62" y2="734.00" stroke="#d0338e" stroke-width="1.0"/>
<line x1="57.59" y1="732.50" x2="59.25" y2="772.60" stroke="#4a5fd6" stroke-width="0.9"/>
<line x1="64.25" y1="728.70" x2="64.67" y2="734.00" stroke="#d0338e" stroke-width="1.0"/>
<line x1="64.60" y1="732.50" x2="67.75" y2="772.60" stroke="#4a5fd6" stroke-width="0.9"/>
<line x1="74.90" y1="728.70" x2="74.44" y2="734.00" stroke="#d0338e" stroke-width="1.0"/>
<line x1="74.52" y1="732.50" x2="71.10" y2="772.60" stroke="#4a5fd6" stroke-width="0.9"/>
<line x1="93.60" y1="728.70" x2="93.95" y2="734.00" stroke="#d0338e" stroke-width="1.0"/>
<line x1="93.89" y1="732.50" x2="96.50" y2="772.60" stroke="#4a5fd6" stroke-width="0.9"/>
<line x1="152.40" y1="728.70" x2="152.10" y2="734.00" stroke="#d0338e" stroke-width="1.0"/>
<line x1="152.15" y1="732.50" x2="149.90" y2="772.60" stroke="#4a5fd6" stroke-width="0.9"/>
<line x1="179.25" y1="728.70" x2="179.52" y2="734.00" stroke="#d0338e" stroke-width="1.0"/>
<line x1="179.47" y1="732.50" x2="181.50" y2="772.60" stroke="#4a5fd6" stroke-width="0.9"/>
<line x1="198.60" y1="728.70" x2="198.90" y2="734.00" stroke="#d0338e" stroke-width="1.0"/>
<line x1="198.85" y1="732.50" x2="201.10" y2="772.60" stroke="#4a5fd6" stroke-width="0.9"/>
<line x1="306.00" y1="728.70" x2="306.31" y2="734.00" stroke="#d0338e" stroke-width="1.0"/>
<line x1="306.26" y1="732.50" x2="308.60" y2="772.60" stroke="#4a5fd6" stroke-width="0.9"/>
<line x1="313.60" y1="728.70" x2="313.98" y2="734.00" stroke="#d0338e" stroke-width="1.0"/>
<line x1="313.92" y1="732.50" x2="316.75" y2="772.60" stroke="#4a5fd6" stroke-width="0.9"/>
<line x1="321.50" y1="728.70" x2="321.23" y2="734.00" stroke="#d0338e" stroke-width="1.0"/>
<line x1="321.27" y1="732.50" x2="319.25" y2="772.60" stroke="#4a5fd6" stroke-width="0.9"/>
<line x1="328.20" y1="728.70" x2="328.51" y2="734.00" stroke="#d0338e" stroke-width="1.0"/>
<line x1="328.45" y1="732.50" x2="330.75" y2="772.60" stroke="#4a5fd6" stroke-width="0.9"/>
<line x1="333.60" y1="728.70" x2="333.26" y2="734.00" stroke="#d0338e" stroke-width="1.0"/>
<line x1="333.31" y1="732.50" x2="330.75" y2="772.60" stroke="#4a5fd6" stroke-width="0.9"/>
<line x1="382.40" y1="728.70" x2="382.70" y2="734.00" stroke="#d0338e" stroke-width="1.0"/>
<line x1="382.65" y1="732.50" x2="384.90" y2="772.60" stroke="#4a5fd6" stroke-width="0.9"/>
<line x1="393.00" y1="728.70" x2="392.55" y2="734.00" stroke="#d0338e" stroke-width="1.0"/>
<line x1="392.62" y1="732.50" x2="389.25" y2="772.60" stroke="#4a5fd6" stroke-width="0.9"/>
<line x1="519.00" y1="728.70" x2="519.30" y2="734.00" stroke="#d0338e" stroke-width="1.0"/>
<line x1="519.25" y1="732.50" x2="521.50" y2="772.60" stroke="#4a5fd6" stroke-width="0.9"/>
<line x1="646.30" y1="728.70" x2="645.95" y2="734.00" stroke="#d0338e" stroke-width="1.0"/>
<line x1="646.00" y1="732.50" x2="643.35" y2="772.60" stroke="#4a5fd6" stroke-width="0.9"/>
<line x1="646.30" y1="728.70" x2="646.56" y2="734.00" stroke="#d0338e" stroke-width="1.0"/>
<line x1="646.52" y1="732.50" x2="648.50" y2="772.60" stroke="#4a5fd6" stroke-width="0.9"/>
<line x1="678.15" y1="728.70" x2="678.44" y2="734.00" stroke="#d0338e" stroke-width="1.0"/>
<line x1="678.39" y1="732.50" x2="680.60" y2="772.60" stroke="#4a5fd6" stroke-width="0.9"/>
<line x1="729.60" y1="728.70" x2="729.34" y2="734.00" stroke="#d0338e" stroke-width="1.0"/>
<line x1="729.38" y1="732.50" x2="727.40" y2="772.60" stroke="#4a5fd6" stroke-width="0.9"/>
<line x1="729.60" y1="728.70" x2="729.90" y2="734.00" stroke="#d0338e" stroke-width="1.0"/>
<line x1="729.85" y1="732.50" x2="732.10" y2="772.60" stroke="#4a5fd6" stroke-width="0.9"/>
<polyline points="53.60,772.60 57.00,760.00 59.00,772.60" fill="none" stroke="#3aa0b0" stroke-width="0.9" stroke-linejoin="round"/>
<polyline points="64.25,751.00 67.75,772.60" fill="none" stroke="#3aa0b0" stroke-width="0.9" stroke-linejoin="round"/>
<polyline points="93.60,751.00 96.50,772.60" fill="none" stroke="#3aa0b0" stroke-width="0.9" stroke-linejoin="round"/>
<polyline points="101.10,751.00 103.60,772.60" fill="none" stroke="#3aa0b0" stroke-width="0.9" stroke-linejoin="round"/>
<polyline points="198.60,762.00 201.10,772.60" fill="none" stroke="#3aa0b0" stroke-width="0.9" stroke-linejoin="round"/>
<polyline points="304.25,772.60 306.50,751.00 308.60,772.60" fill="none" stroke="#3aa0b0" stroke-width="0.9" stroke-linejoin="round"/>
<polyline points="313.60,751.00 316.75,772.60" fill="none" stroke="#3aa0b0" stroke-width="0.9" stroke-linejoin="round"/>
<polyline points="326.10,772.60 328.20,751.00 330.75,772.60" fill="none" stroke="#3aa0b0" stroke-width="0.9" stroke-linejoin="round"/>
<polyline points="333.00,751.00 336.10,772.60" fill="none" stroke="#3aa0b0" stroke-width="0.9" stroke-linejoin="round"/>
<polyline points="382.40,757.00 384.90,772.60" fill="none" stroke="#3aa0b0" stroke-width="0.9" stroke-linejoin="round"/>
<polyline points="519.00,751.00 521.50,772.60" fill="none" stroke="#3aa0b0" stroke-width="0.9" stroke-linejoin="round"/>
<polyline points="727.40,772.60 729.60,751.00 732.10,772.60" fill="none" stroke="#3aa0b0" stroke-width="0.9" stroke-linejoin="round"/>
<rect x="729.90" y="770.20" width="4.40" height="4.40" fill="#3aa0b0"/>
<line x1="27.50" y1="793.75" x2="38.50" y2="793.75" stroke="#3aa0b0" stroke-width="1.3"/>
<rect x="36.50" y="791.25" width="5.00" height="5.00" fill="#3aa0b0"/>
<text x="48.50" y="797.75" font-size="8.6" fill="#3c4043" letter-spacing="-0.15">50%: 1</text>
<line x1="125.00" y1="793.75" x2="136.00" y2="793.75" stroke="#3a67d8" stroke-width="1.3"/>
<circle cx="136.50" cy="793.75" r="2.5" fill="#3a67d8"/>
<text x="146.00" y="797.75" font-size="8.6" fill="#3c4043" letter-spacing="-0.15">95%: 1</text>
<line x1="222.00" y1="793.75" x2="233.00" y2="793.75" stroke="#d0338e" stroke-width="1.3"/>
<path d="M233.50,790.62 L236.62,793.75 L233.50,796.88 L230.38,793.75 Z" fill="#d0338e"/>
<text x="243.00" y="797.75" font-size="8.6" fill="#3c4043" letter-spacing="-0.15">99%: 1</text>
</svg>
</body></html>
